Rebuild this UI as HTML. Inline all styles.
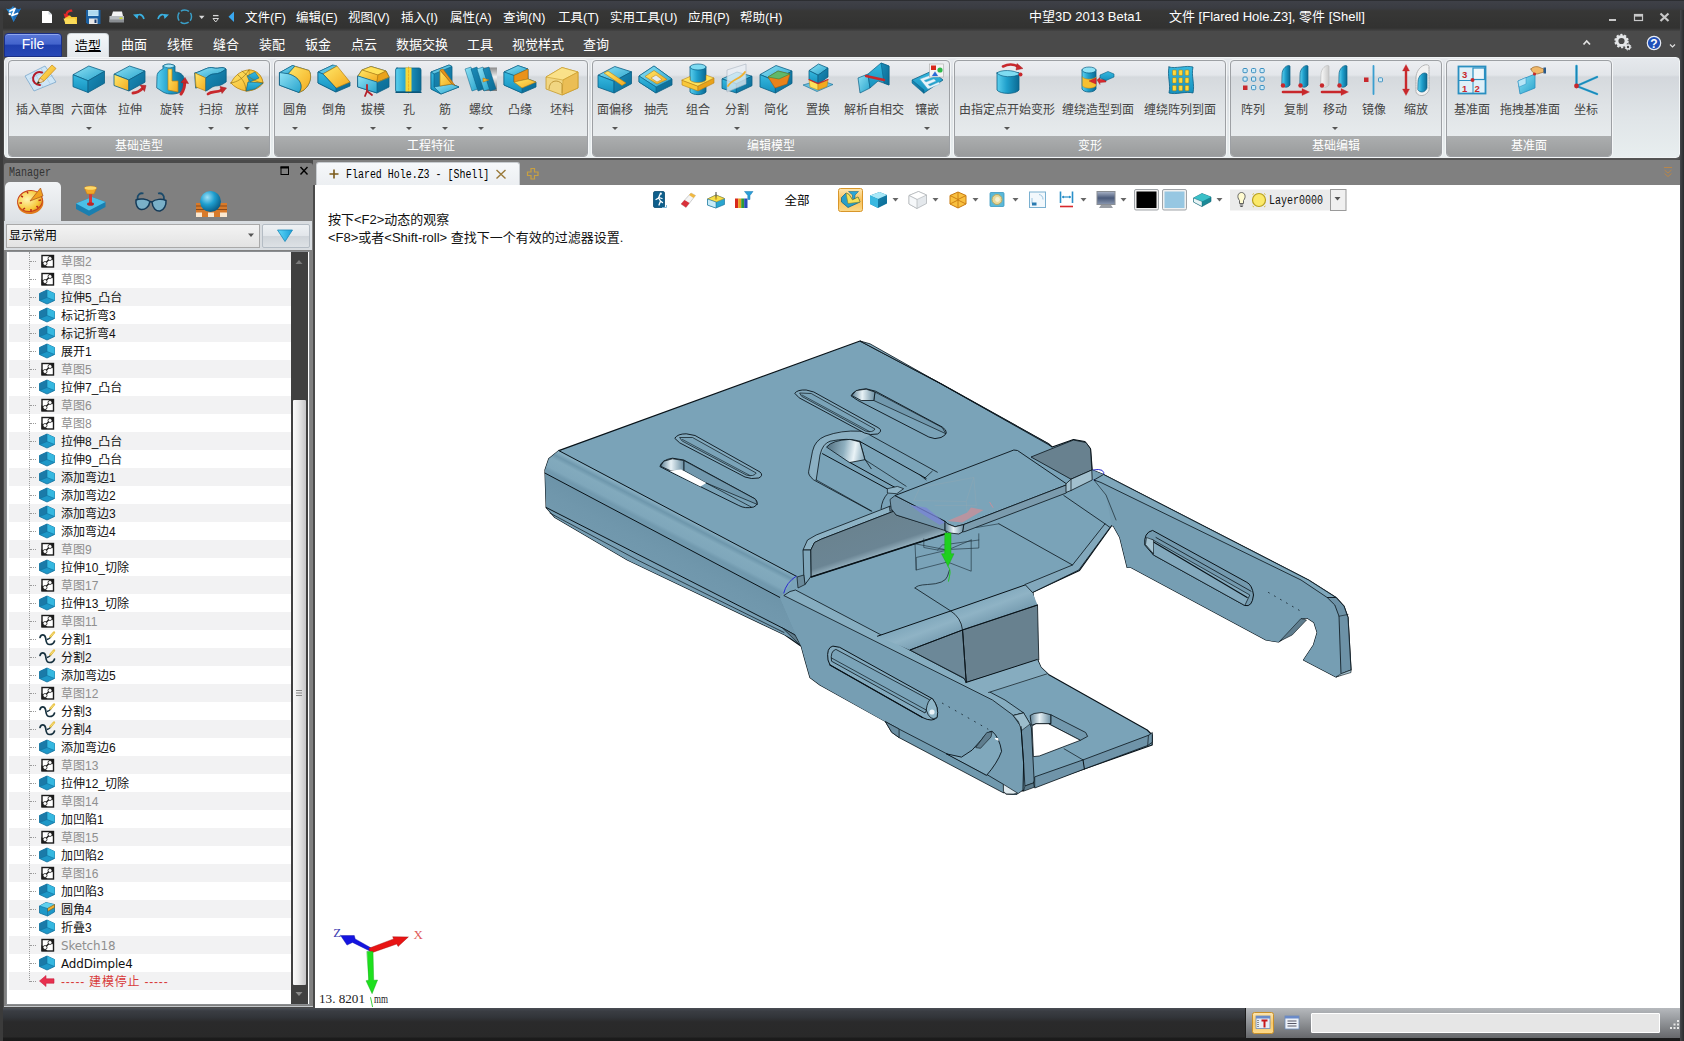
<!DOCTYPE html>
<html lang="zh-CN">
<head>
<meta charset="utf-8">
<title>中望3D 2013 Beta1</title>
<style>
*{box-sizing:border-box;margin:0;padding:0}
html,body{width:1684px;height:1041px;overflow:hidden}
body{position:relative;background:#4a4a4a;font-family:"Liberation Sans","Noto Sans CJK SC",sans-serif;font-size:12px;color:#222}
.abs{position:absolute}
#title{left:0;top:0;width:1684px;height:31px;background:linear-gradient(#232426 0,#3e4047 1.5px,#3a3c42 8px,#373736 11px,#323231 28px,#3e3e3e 30px,#454545 31px)}
#title .t{position:absolute;top:8px;color:#fff;font-size:13px;white-space:nowrap;line-height:17px}
#tabrow{left:0;top:31px;width:1684px;height:27px;background:#4a4a4a}
#lborder{left:0;top:10px;width:3px;height:1031px;background:#3b3b3b}
#rborder{left:1680px;top:10px;width:4px;height:1031px;background:linear-gradient(90deg,#45474b,#2a2a2c)}
.menu{position:absolute;top:10px;color:#fff;font-size:12.5px;white-space:nowrap;line-height:17px}
#file{left:4px;top:33px;width:58px;height:24px;border-radius:4px 4px 0 0;border:1px solid #1a2f86;background:linear-gradient(#5a78d8 0,#4364cc 45%,#1f3fae 52%,#2748b6 100%);color:#fff;font-size:14px;text-align:center;line-height:21px;box-shadow:inset 0 1px 0 #8fa6ee}
.rtab{position:absolute;top:36px;color:#fff;font-size:13px;line-height:17px;white-space:nowrap;transform:translateX(-50%)}
#acttab{left:67px;top:33px;width:42px;height:25px;border-radius:4px 4px 0 0;background:linear-gradient(#f4f7f9,#e3e8ec);border:1px solid #cfd6da;border-bottom:0}
#acttab span{position:absolute;left:0;width:40px;top:3px;text-align:center;color:#000;font-size:13px;line-height:17px;text-decoration:underline}
#ribbon{left:4px;top:56.5px;width:1676px;height:101px;border-radius:4px;background:linear-gradient(#e6e9ed 0,#dde1e5 17px,#d3d7dc 19px,#e0e5e8 60px,#e8eeef 100%);border:1px solid #f2f5f6;box-shadow:0 1.5px 1px #555}
.grp{position:absolute;top:60px;height:97px;border-radius:4px;border:1px solid #9da0a4;background:linear-gradient(#eceef1 0,#e3e6ea 14px,#d5d9dd 16px,#dfe3e6 45px,#e7ebed 76px,#e7ebed 100%);box-shadow:0 0 0 1px #f4f6f7;overflow:hidden}
.grp .gl{position:absolute;left:0;right:0;bottom:0;height:20px;background:linear-gradient(#acaeaf,#999b9c);color:#fff;font-size:12px;line-height:20px;text-align:center}
.rb{position:absolute;top:101.5px;font-size:12px;line-height:17px;color:#444;white-space:nowrap;transform:translateX(-50%)}
.dd{position:absolute;top:127px;width:0;height:0;border:3px solid transparent;border-top:3.5px solid #555;margin-left:-3px}
.ico{position:absolute;overflow:visible}
/* left panel */
#lp{left:4px;top:163px;width:309px;height:843.5px;border-bottom:1.5px solid #c4c8cc;background:#808080;border-radius:3px 3px 0 0}
#lp .hdr{position:absolute;left:4.5px;top:3px;font-family:"Liberation Mono",monospace;font-size:12px;color:#333;line-height:14px;transform:scaleX(.833);transform-origin:0 0}
#ltab{left:4.5px;top:182px;width:56px;height:40px;border-radius:5px 5px 0 0;background:linear-gradient(#f2f4f6,#dde1e5)}
#lstrip{left:4px;top:221px;width:308px;height:29px;background:#d9dde1}
#combo{left:6px;top:224px;width:254px;height:24px;background:linear-gradient(#f3f3f3,#e3e3e3);border:1px solid #a9a9a9;font-size:12px;line-height:23px;padding-left:2px;color:#000}
#fbtn{left:262px;top:224px;width:48px;height:24px;background:linear-gradient(#eef1f4 0,#e2e6ea 48%,#d0d5da 52%,#dde1e5 100%);border:1px solid #b4bcc4;border-radius:2px}
#tree{left:6px;top:251px;width:304px;height:754px;background:#fff;border:1px solid #8a8d90;overflow:hidden}
.tr{position:absolute;left:2px;width:282px;height:18px}
.tr.alt{background:#f2f2f3}
.tl{position:absolute;left:60px;top:1px;font-size:12px;line-height:18px;white-space:nowrap;color:#111}
.tl.g{color:#8f8f8f}
.tl.r{color:#d83a3a}
#vline{left:29px;top:252px;width:0;height:730px;border-left:1px dotted #9a9a9a}
#sb{left:291px;top:252px;width:17px;height:752px;background:#404040}
#sbthumb{left:293px;top:400px;width:13px;height:585px;border-radius:1px;background:linear-gradient(90deg,#fafafa 0,#ececec 40%,#c4c4c6 100%)}
/* doc area */
#dochdr{left:313px;top:160px;width:1367px;height:25px;background:#808080}
#doctab{left:316px;top:162px;width:204px;height:23px;background:linear-gradient(#f6f8fa,#eceff2);border-radius:3px 3px 0 0;border:1px solid #c8ccd0;border-bottom:0}
#doctab .tx{position:absolute;left:28.5px;top:4.5px;font-family:"Liberation Mono",monospace;font-size:12px;color:#000;white-space:nowrap;line-height:14px;transform:scaleX(.829);transform-origin:0 0}
#view{left:314.5px;top:185px;width:1365px;height:823px;background:#fff}
.msg{position:absolute;left:328px;font-size:13px;line-height:16px;color:#111;white-space:nowrap}
/* status */
#status{left:0;top:1008px;width:1684px;height:33px;background:linear-gradient(#4a4e55 0,#3a3d43 3px,#32353a 9px,#2a2a2b 14px,#292929 29px,#1c1c1c 30px,#1a1a1a 100%)}
#sright{left:1245px;top:1008px;width:435px;height:30px;background:linear-gradient(#b6b9bd 0,#9a9da1 35%,#66686b 100%);border-left:1px solid #1c1c1c}
#sinput{left:1311px;top:1013px;width:349px;height:20px;background:#e6e6e6;border:1px solid #fff;border-radius:1px}
.tl.en{font-family:"DejaVu Sans",sans-serif;font-size:11.9px;letter-spacing:-.1px}
.tl.r{letter-spacing:.8px}
.hc{position:absolute;left:21px;top:9px;width:6px;border-top:1px dotted #9a9a9a}
</style>
</head>
<body>

<div class="abs" id="title">
<span class="menu" style="left:245px">文件(F)</span>
<span class="menu" style="left:296px">编辑(E)</span>
<span class="menu" style="left:348px">视图(V)</span>
<span class="menu" style="left:401px">插入(I)</span>
<span class="menu" style="left:450px">属性(A)</span>
<span class="menu" style="left:503px">查询(N)</span>
<span class="menu" style="left:558px">工具(T)</span>
<span class="menu" style="left:610px">实用工具(U)</span>
<span class="menu" style="left:688px">应用(P)</span>
<span class="menu" style="left:740px">帮助(H)</span>
<span class="t" style="left:1029px">中望3D 2013 Beta1</span>
<span class="t" style="left:1169px">文件 [Flared Hole.Z3], 零件 [Shell]</span>
</div>
<div class="abs" id="tabrow"></div>
<div class="abs" id="file">File</div>
<div class="abs" id="acttab"><span>造型</span></div>
<span class="rtab" style="left:134px">曲面</span>
<span class="rtab" style="left:180px">线框</span>
<span class="rtab" style="left:226px">缝合</span>
<span class="rtab" style="left:272px">装配</span>
<span class="rtab" style="left:318px">钣金</span>
<span class="rtab" style="left:364px">点云</span>
<span class="rtab" style="left:422px">数据交换</span>
<span class="rtab" style="left:480px">工具</span>
<span class="rtab" style="left:538px">视觉样式</span>
<span class="rtab" style="left:596px">查询</span>
<div class="abs" id="ribbon"></div>
<div class="grp" style="left:8px;width:262px"><div class="gl">基础造型</div></div>
<div class="grp" style="left:274px;width:314px"><div class="gl">工程特征</div></div>
<div class="grp" style="left:592px;width:358px"><div class="gl">编辑模型</div></div>
<div class="grp" style="left:954px;width:272px"><div class="gl">变形</div></div>
<div class="grp" style="left:1230px;width:212px"><div class="gl">基础编辑</div></div>
<div class="grp" style="left:1446px;width:166px"><div class="gl">基准面</div></div>
<span class="rb" style="left:40px">插入草图</span>
<span class="rb" style="left:89px">六面体</span>
<i class="dd" style="left:89px"></i>
<span class="rb" style="left:130px">拉伸</span>
<span class="rb" style="left:172px">旋转</span>
<span class="rb" style="left:211px">扫掠</span>
<i class="dd" style="left:211px"></i>
<span class="rb" style="left:247px">放样</span>
<i class="dd" style="left:247px"></i>
<span class="rb" style="left:295px">圆角</span>
<i class="dd" style="left:295px"></i>
<span class="rb" style="left:334px">倒角</span>
<span class="rb" style="left:373px">拔模</span>
<i class="dd" style="left:373px"></i>
<span class="rb" style="left:409px">孔</span>
<i class="dd" style="left:409px"></i>
<span class="rb" style="left:445px">筋</span>
<i class="dd" style="left:445px"></i>
<span class="rb" style="left:481px">螺纹</span>
<i class="dd" style="left:481px"></i>
<span class="rb" style="left:520px">凸缘</span>
<span class="rb" style="left:562px">坯料</span>
<span class="rb" style="left:615px">面偏移</span>
<i class="dd" style="left:615px"></i>
<span class="rb" style="left:656px">抽壳</span>
<span class="rb" style="left:698px">组合</span>
<span class="rb" style="left:737px">分割</span>
<i class="dd" style="left:737px"></i>
<span class="rb" style="left:776px">简化</span>
<span class="rb" style="left:818px">置换</span>
<span class="rb" style="left:874px">解析自相交</span>
<span class="rb" style="left:927px">镶嵌</span>
<i class="dd" style="left:927px"></i>
<span class="rb" style="left:1007px">由指定点开始变形</span>
<i class="dd" style="left:1007px"></i>
<span class="rb" style="left:1098px">缠绕造型到面</span>
<span class="rb" style="left:1180px">缠绕阵列到面</span>
<span class="rb" style="left:1253px">阵列</span>
<span class="rb" style="left:1296px">复制</span>
<span class="rb" style="left:1335px">移动</span>
<i class="dd" style="left:1335px"></i>
<span class="rb" style="left:1374px">镜像</span>
<span class="rb" style="left:1416px">缩放</span>
<span class="rb" style="left:1472px">基准面</span>
<span class="rb" style="left:1530px">拖拽基准面</span>
<span class="rb" style="left:1586px">坐标</span>
<svg width="0" height="0" style="position:absolute">
<defs>
<g id="i-c"><path d="M1.500 5.500 L9 2 L16.500 5.500 L16.500 12.500 L9 16 L1.500 12.500 Z" fill="#1e98c8" stroke="#0f6f9c" stroke-width=".8" stroke-linejoin="round"/><path d="M1.500 5.500 L9 2 L9 9.500 L1.500 12.500 Z" fill="#1a7aa8"/><path d="M9 2 L16.500 5.500 L16.500 12.500 L9 9.500 Z" fill="#36b8e0"/><path d="M9 2 L9 9.500 L1.500 12.500 M9 9.500 L16.500 12.500" fill="none" stroke="#0f6f9c" stroke-width=".6"/></g>
<g id="i-s"><rect x="4" y="3.500" width="11.500" height="11.500" fill="#fff" stroke="#1a1a1a" stroke-width="1.400"/><path d="M3.500 9 L3.500 15 L9.500 15 Z" fill="#1a1a1a"/><path d="M9.500 3 L15.500 3 L15.500 9 Z" fill="#1a1a1a"/><path d="M6.500 12 L12.500 6" stroke="#1a1a1a" stroke-width="1.400"/><circle cx="7" cy="11.500" r="2" fill="#fff" stroke="#1a1a1a" stroke-width=".8"/><circle cx="12" cy="6.500" r="2" fill="#fff" stroke="#1a1a1a" stroke-width=".8"/></g>
<g id="i-p"><path d="M2 7.500 C3 4,6.500 4,7.500 7.500 C8.500 11,7.500 14.500,11.500 14.500 C14 14.500,16 13,16.500 11" fill="none" stroke="#16303e" stroke-width="1.700" stroke-linecap="round"/><path d="M9 9.500 C11 9,13 7,14 5" fill="none" stroke="#16303e" stroke-width="1.300"/><path d="M12.500 6.500 L16 2.500" stroke="#e8c040" stroke-width="2.400" stroke-linecap="round"/><path d="M13 6 L15.500 3" stroke="#f8e48a" stroke-width=".9" stroke-linecap="round"/></g>
<g id="i-f"><path d="M1.500 6 L8 2.500 L16.500 4.500 L16.500 12 L9.500 16 L1.500 13 Z" fill="#1e98c8" stroke="#0f6f9c" stroke-width=".8" stroke-linejoin="round"/><path d="M1.500 6 L8 2.500 L16.500 4.500 L9.500 8.500 Z" fill="#5fd0ee"/><path d="M9.500 8.500 L16.500 4.500 L16.500 7.500 L9.500 11.500 Z" fill="#f0b030" stroke="#8a5a10" stroke-width=".6"/><path d="M1.500 6 L9.500 8.500 L9.500 16" fill="none" stroke="#0f6f9c" stroke-width=".6"/></g>
<g id="i-a"><path d="M1.500 9 L8 3.500 L8 6.800 L16 6.800 L16 11.200 L8 11.200 L8 14.500 Z" fill="#e8304e" stroke="#c82040" stroke-width=".6"/></g>
</defs></svg>

<svg class="abs" style="left:0;top:0" width="1684" height="160" viewBox="0 0 1684 160">
<defs>
<linearGradient id="gT" x1="0" y1="0" x2="1" y2="1"><stop offset="0" stop-color="#8fe2f5"/><stop offset="1" stop-color="#27a3cc"/></linearGradient>
<linearGradient id="gF" x1="0" y1="0" x2="0" y2="1"><stop offset="0" stop-color="#36b9e0"/><stop offset="1" stop-color="#1590bd"/></linearGradient>
<linearGradient id="gS" x1="0" y1="0" x2="1" y2="1"><stop offset="0" stop-color="#1b8dba"/><stop offset="1" stop-color="#0b6a93"/></linearGradient>
<linearGradient id="gY" x1="0" y1="0" x2="1" y2="1"><stop offset="0" stop-color="#ffe96a"/><stop offset="1" stop-color="#f3a91e"/></linearGradient>
<linearGradient id="gCy" x1="0" y1="0" x2="1" y2="0"><stop offset="0" stop-color="#5cd0ee"/><stop offset=".45" stop-color="#1f9fcb"/><stop offset="1" stop-color="#0b6a93"/></linearGradient>
<linearGradient id="gW" x1="0" y1="0" x2="1" y2="0"><stop offset="0" stop-color="#fafafa"/><stop offset="1" stop-color="#c9c9c9"/></linearGradient>
<linearGradient id="gM" x1="0" y1="0" x2="0" y2="1"><stop offset="0" stop-color="#8a8a8a"/><stop offset=".4" stop-color="#f2f2f2"/><stop offset="1" stop-color="#7a7a7a"/></linearGradient>
</defs>
<polygon points="25.0,76.0 45.0,66.0 56.0,82.0 34.0,91.0" fill="#cfe6f6" stroke="#7aa7cc" stroke-width="0.8" stroke-linejoin="round" />
<path d="M30 78.500 L50 69.500 M33 84 L53 75.500 M34 72 L43 87 M41 68.500 L50 83.500" fill="none" stroke="#9fc4e2" stroke-width="0.6" stroke-linejoin="round" stroke-linecap="round" />
<path d="M42 72.500 A6.500 6.500 0 1 0 40 85" fill="none" stroke="#b31a2a" stroke-width="2" stroke-linejoin="round" stroke-linecap="round" />
<polygon points="37.0,84.0 40.0,78.0 52.0,65.0 56.0,68.5 44.0,81.0" fill="url(#gY)" stroke="#c98a12" stroke-width="0.7" stroke-linejoin="round" />
<polygon points="37.0,84.0 40.0,78.0 44.0,81.0" fill="#f5d6a8" stroke="#a9753a" stroke-width="0.5" stroke-linejoin="round" />
<polygon points="37.0,84.0 38.2,81.5 39.8,82.7" fill="#222" stroke="#222" stroke-width="0.3" stroke-linejoin="round" />
<polygon points="73.0,74.7 88.8,66.0 104.5,71.3 88.1,80.8" fill="url(#gT)" stroke="#0b5f85" stroke-width="0.8" stroke-linejoin="round" />
<polygon points="73.0,74.7 88.1,80.8 88.1,92.5 73.0,86.7" fill="url(#gF)" stroke="#0b5f85" stroke-width="0.8" stroke-linejoin="round" />
<polygon points="88.1,80.8 104.5,71.3 104.5,83.2 88.1,92.5" fill="url(#gS)" stroke="#0b5f85" stroke-width="0.8" stroke-linejoin="round" />
<polygon points="114.0,74.2 129.5,66.0 145.0,71.0 128.9,80.0" fill="url(#gT)" stroke="#0b5f85" stroke-width="0.8" stroke-linejoin="round" />
<polygon points="114.0,74.2 128.9,80.0 128.9,91.0 114.0,85.5" fill="url(#gY)" stroke="#0b5f85" stroke-width="0.8" stroke-linejoin="round" />
<polygon points="128.9,80.0 145.0,71.0 145.0,82.2 128.9,91.0" fill="url(#gS)" stroke="#0b5f85" stroke-width="0.8" stroke-linejoin="round" />
<path d="M133 93 C137 93,140 91,143 88" fill="none" stroke="#c8282c" stroke-width="3" stroke-linejoin="round" stroke-linecap="round" />
<polygon points="140.0,85.0 146.0,85.5 144.5,91.5" fill="#c8282c" stroke="#a01c20" stroke-width="0.5" stroke-linejoin="round" />
<path d="M157 76 C157 71,163 69,163 69 L163 66 C165 63.500,172 63.500,175 66 L175 72 C180 72,184 75,184 79 L184 90 C178 95,168 95,163 92 L157 88 Z" fill="url(#gCy)" stroke="#0b5f85" stroke-width="0.8" stroke-linejoin="round" stroke-linecap="round" />
<path d="M163 66 C166 68.500,172 68.500,175 66 C172 63.500,165 63.500,163 66 Z" fill="#a8e8f8" stroke="#0b5f85" stroke-width="0.6" stroke-linejoin="round" stroke-linecap="round" />
<polygon points="168.0,69.0 172.0,69.0 172.0,81.0 178.0,81.0 178.0,92.0 168.0,90.0" fill="url(#gY)" stroke="#b98214" stroke-width="0.7" stroke-linejoin="round" />
<path d="M181 94 C184 90,185 86,184.500 82" fill="none" stroke="#c8282c" stroke-width="3" stroke-linejoin="round" stroke-linecap="round" />
<polygon points="181.0,82.5 185.0,77.5 188.5,83.5" fill="#c8282c" stroke="#a01c20" stroke-width="0.5" stroke-linejoin="round" />
<path d="M195 73 C203 71,208 66,214 68 C219 69,222 66,226 69 L226 82 C222 80,219 83,214 82 C209 81,204 86,196 88 Z" fill="url(#gS)" stroke="#0b5f85" stroke-width="0.8" stroke-linejoin="round" stroke-linecap="round" />
<path d="M195 73 C203 71,208 66,214 68 C219 69,222 66,226 69 C222 72,219 74,214 74 C209 74,207 78,206 78 Z" fill="url(#gT)" stroke="#0b5f85" stroke-width="0.7" stroke-linejoin="round" stroke-linecap="round" />
<polygon points="195.0,73.0 206.0,78.0 206.0,91.0 196.0,87.0" fill="url(#gY)" stroke="#b98214" stroke-width="0.7" stroke-linejoin="round" />
<path d="M206 78 C209 76,211 74,214 74 C219 74,222 72,226 69 L226 82 C222 85,219 86,215 86 C211 87,209 90,206 91 Z" fill="url(#gS)" stroke="#0b5f85" stroke-width="0.7" stroke-linejoin="round" stroke-linecap="round" />
<path d="M208 94 C212 91,216 93,222 90" fill="none" stroke="#c8282c" stroke-width="2.8" stroke-linejoin="round" stroke-linecap="round" />
<polygon points="220.0,86.5 226.5,88.0 222.0,93.5" fill="#c8282c" stroke="#a01c20" stroke-width="0.5" stroke-linejoin="round" />
<path d="M231 83 C235 74,243 70,249 70 C256 70,262 75,263 83 C260 88,252 91,246 91 C240 90,234 87,231 83 Z" fill="url(#gY)" stroke="#b98214" stroke-width="0.8" stroke-linejoin="round" stroke-linecap="round" />
<path d="M249 70 C256 70,262 75,263 83 C260 88,252 91,246 91 C248 85,250 78,249 70 Z" fill="#f7c83a" stroke="#b98214" stroke-width="0.6" stroke-linejoin="round" stroke-linecap="round" />
<polygon points="246.0,91.0 248.0,82.0 263.0,83.0 255.0,89.0" fill="url(#gF)" stroke="#0b5f85" stroke-width="0.6" stroke-linejoin="round" />
<polygon points="247.0,76.0 255.0,72.0 259.0,78.0 250.0,82.0" fill="url(#gF)" stroke="#0b5f85" stroke-width="0.5" stroke-linejoin="round" />
<path d="M238 75 C243 79,246 85,246 91 M242 71 C248 76,254 82,263 83 M231 83 C237 82,243 79,249 70" fill="none" stroke="#8a6a10" stroke-width="0.6" stroke-linejoin="round" stroke-linecap="round" />
<path d="M279.800 72.600 L292.500 65.500 L309 70.500 C312 75,311 84,304 90 L299 92.500 L279.800 85.300 Z" fill="url(#gS)" stroke="#0b5f85" stroke-width="0.8" stroke-linejoin="round" stroke-linecap="round" />
<path d="M288 73.700 L294.700 66.300 L309 70.500 C312 75,311 84,304 90 L299 92.500 C304 86,300 77,288 73.700 Z" fill="url(#gY)" stroke="#b98214" stroke-width="0.7" stroke-linejoin="round" stroke-linecap="round" />
<path d="M279.800 72.600 L292.500 65.500 L294.700 66.300 L288 73.700 Z" fill="url(#gT)" stroke="#0b5f85" stroke-width="0.6" stroke-linejoin="round" stroke-linecap="round" />
<path d="M279.800 72.600 L288 73.700 C300 77,304 86,299 92.500 L279.800 85.300 Z" fill="url(#gT)" stroke="#0b5f85" stroke-width="0.7" stroke-linejoin="round" stroke-linecap="round" />
<polygon points="318.0,72.0 333.0,65.0 350.0,82.0 350.0,86.0 336.0,92.0 318.0,83.0" fill="url(#gS)" stroke="#0b5f85" stroke-width="0.8" stroke-linejoin="round" />
<polygon points="318.0,72.0 333.0,65.0 337.0,66.0 323.0,74.0" fill="url(#gT)" stroke="#0b5f85" stroke-width="0.6" stroke-linejoin="round" />
<polygon points="323.0,74.0 337.0,66.0 350.0,82.0 336.0,88.0" fill="url(#gY)" stroke="#b98214" stroke-width="0.7" stroke-linejoin="round" />
<polygon points="318.0,72.0 323.0,74.0 336.0,88.0 336.0,92.0 318.0,83.0" fill="url(#gF)" stroke="#0b5f85" stroke-width="0.7" stroke-linejoin="round" />
<path d="M358 76 L362 70 L371 66.500 L386 71 L389 77 L389 87 L377 93 L358 87 Z" fill="url(#gS)" stroke="#0b5f85" stroke-width="0.8" stroke-linejoin="round" stroke-linecap="round" />
<path d="M362 70 L371 66.500 L386 71 L378 75 Z" fill="#ffe25a" stroke="#b98214" stroke-width="0.7" stroke-linejoin="round" stroke-linecap="round" />
<path d="M358 76 L362 70 L378 75 L377 82 Z" fill="url(#gY)" stroke="#b98214" stroke-width="0.7" stroke-linejoin="round" stroke-linecap="round" />
<path d="M377 82 L378 75 L386 71 L389 77 Z" fill="#e9a21a" stroke="#b98214" stroke-width="0.7" stroke-linejoin="round" stroke-linecap="round" />
<path d="M358 76 L377 82 L377 93 L358 87 Z" fill="url(#gT)" stroke="#0b5f85" stroke-width="0.7" stroke-linejoin="round" stroke-linecap="round" />
<path d="M365 96 L367 91 L367 85 M367 91 L372 95" fill="none" stroke="#b3202a" stroke-width="1.8" stroke-linejoin="round" stroke-linecap="round" />
<path d="M397 68 L419 68 Q421 68 421 70 L421 90 Q421 92 419 92 L397 92 Q395.600 92 395.600 90 L395.600 70 Q395.600 68 397 68 Z" fill="url(#gCy)" stroke="#0b5f85" stroke-width="0.8" stroke-linejoin="round" stroke-linecap="round" />
<rect x="405.500" y="67.500" width="6" height="25" fill="#f4d83a"/>
<path d="M408.500 67 L408.500 93" fill="none" stroke="#e8a81e" stroke-width="0.8" stroke-linejoin="round" stroke-linecap="round" stroke-dasharray="2 1.500"/>
<path d="M396 92.300 L421 92.300" fill="none" stroke="#0a5578" stroke-width="1.4" stroke-linejoin="round" stroke-linecap="round" />
<polygon points="431.0,72.0 449.0,65.0 452.0,66.5 452.0,84.0 459.0,87.0 441.0,94.0 431.0,89.0" fill="url(#gS)" stroke="#0b5f85" stroke-width="0.8" stroke-linejoin="round" />
<polygon points="431.0,72.0 449.0,65.0 452.0,66.5 434.0,74.0" fill="url(#gT)" stroke="#0b5f85" stroke-width="0.6" stroke-linejoin="round" />
<polygon points="431.0,72.0 434.0,74.0 434.0,87.0 441.0,90.5 441.0,94.0 431.0,89.0" fill="url(#gF)" stroke="#0b5f85" stroke-width="0.6" stroke-linejoin="round" />
<polygon points="434.0,87.0 452.0,84.0 459.0,87.0 441.0,94.0" fill="url(#gT)" stroke="#0b5f85" stroke-width="0.6" stroke-linejoin="round" />
<polygon points="440.0,70.0 440.0,86.0 452.0,84.0" fill="url(#gY)" stroke="#b98214" stroke-width="0.7" stroke-linejoin="round" />
<polygon points="440.0,70.0 443.0,69.0 455.0,85.5 452.0,84.0" fill="#e9921a" stroke="#a86a10" stroke-width="0.6" stroke-linejoin="round" />
<rect x="483" y="67.500" width="14" height="23.500" fill="url(#gM)"/>
<polygon points="465.0,69.0 471.0,67.0 478.0,89.0 472.0,91.0" fill="url(#gT)" stroke="#0b5f85" stroke-width="0.5" stroke-linejoin="round" />
<polygon points="471.0,69.0 477.0,67.0 484.0,89.0 478.0,91.0" fill="url(#gS)" stroke="#0b5f85" stroke-width="0.5" stroke-linejoin="round" />
<polygon points="477.0,69.0 483.0,67.0 490.0,89.0 484.0,91.0" fill="url(#gT)" stroke="#0b5f85" stroke-width="0.5" stroke-linejoin="round" />
<polygon points="483.0,69.0 489.0,67.0 496.0,89.0 490.0,91.0" fill="url(#gS)" stroke="#0b5f85" stroke-width="0.5" stroke-linejoin="round" />
<polygon points="483.0,78.0 489.0,80.0 483.0,82.0" fill="#f3b52a" stroke="#a86a10" stroke-width="0.5" stroke-linejoin="round" />
<polygon points="504.0,72.0 518.0,65.6 528.0,69.0 528.0,79.0 536.0,82.0 536.0,87.0 522.0,93.0 504.0,85.0" fill="url(#gS)" stroke="#0b5f85" stroke-width="0.8" stroke-linejoin="round" />
<polygon points="504.0,72.0 518.0,65.6 528.0,69.0 514.0,75.5" fill="url(#gT)" stroke="#0b5f85" stroke-width="0.6" stroke-linejoin="round" />
<polygon points="504.0,72.0 514.0,75.5 514.0,82.0 522.0,85.5 522.0,93.0 504.0,85.0" fill="url(#gF)" stroke="#0b5f85" stroke-width="0.6" stroke-linejoin="round" />
<polygon points="514.0,75.5 528.0,69.0 528.0,79.0 514.0,82.0" fill="#e9921a" stroke="#a86a10" stroke-width="0.6" stroke-linejoin="round" />
<polygon points="514.0,82.0 528.0,79.0 536.0,82.0 522.0,88.0" fill="url(#gY)" stroke="#b98214" stroke-width="0.6" stroke-linejoin="round" />
<polygon points="546.0,77.0 562.0,67.5 578.0,72.0 578.0,88.0 562.0,95.0 546.0,89.0" fill="#f7d56a" stroke="#c79a2a" stroke-width="0.8" stroke-linejoin="round" fill-opacity=".8"/>
<polygon points="546.0,77.0 562.0,67.5 578.0,72.0 563.0,80.0" fill="#fbe28a" stroke="#c79a2a" stroke-width="0.6" stroke-linejoin="round" fill-opacity=".9"/>
<polygon points="563.0,80.0 578.0,72.0 578.0,88.0 562.0,95.0" fill="#eab84a" stroke="#c79a2a" stroke-width="0.6" stroke-linejoin="round" fill-opacity=".8"/>
<path d="M549 89 C549 80,558 79,562 84 L562 93" fill="none" stroke="#b58a2a" stroke-width="0.8" stroke-linejoin="round" stroke-linecap="round" />
<polygon points="598.0,75.2 614.8,66.5 631.5,71.8 614.1,81.3" fill="url(#gT)" stroke="#0b5f85" stroke-width="0.8" stroke-linejoin="round" />
<polygon points="598.0,75.2 614.1,81.3 614.1,93.0 598.0,87.2" fill="url(#gF)" stroke="#0b5f85" stroke-width="0.8" stroke-linejoin="round" />
<polygon points="614.1,81.3 631.5,71.8 631.5,83.7 614.1,93.0" fill="url(#gS)" stroke="#0b5f85" stroke-width="0.8" stroke-linejoin="round" />
<polygon points="604.0,73.0 608.0,71.0 626.0,83.0 622.0,85.5" fill="url(#gY)" stroke="#b98214" stroke-width="0.6" stroke-linejoin="round" />
<polygon points="639.0,76.0 654.0,66.0 672.0,79.0 672.0,85.0 656.0,93.0 639.0,82.0" fill="url(#gS)" stroke="#0b5f85" stroke-width="0.8" stroke-linejoin="round" />
<polygon points="639.0,76.0 654.0,66.0 672.0,79.0 656.0,87.0" fill="url(#gT)" stroke="#0b5f85" stroke-width="0.6" stroke-linejoin="round" />
<polygon points="645.0,76.5 654.0,70.5 667.0,79.5 657.0,84.0" fill="url(#gY)" stroke="#b98214" stroke-width="0.6" stroke-linejoin="round" />
<polygon points="651.0,78.0 656.0,75.0 662.0,79.5 657.0,82.0" fill="#e6ebef" stroke="#b98214" stroke-width="0.5" stroke-linejoin="round" />
<polygon points="639.0,76.0 656.0,87.0 656.0,93.0 639.0,82.0" fill="url(#gF)" stroke="#0b5f85" stroke-width="0.6" stroke-linejoin="round" />
<path d="M690 67 L690 92 C693 95.500,703 95.500,706 92 L706 67 Z" fill="url(#gCy)" stroke="#0b5f85" stroke-width="0.8" stroke-linejoin="round" stroke-linecap="round" />
<ellipse cx="698" cy="67" rx="8" ry="3" fill="#7fdcf2" stroke="#0b5f85" stroke-width=".7"/>
<polygon points="682.0,80.0 698.0,86.0 698.0,91.0 682.0,85.0" fill="#f8c83a" stroke="#b98214" stroke-width="0.6" stroke-linejoin="round" />
<polygon points="698.0,86.0 714.0,78.0 714.0,83.0 698.0,91.0" fill="#e9a21a" stroke="#b98214" stroke-width="0.6" stroke-linejoin="round" />
<path d="M682 80 L690 76.500 L690 80 C693 83.500,703 83.500,706 80 L706 75 L714 78 L698 86 Z" fill="#ffe25a" stroke="#b98214" stroke-width="0.6" stroke-linejoin="round" stroke-linecap="round" />
<polygon points="722.0,78.9 737.0,72.0 752.0,76.2 736.4,83.8" fill="url(#gT)" stroke="#0b5f85" stroke-width="0.8" stroke-linejoin="round" />
<polygon points="722.0,78.9 736.4,83.8 736.4,93.0 722.0,88.4" fill="url(#gF)" stroke="#0b5f85" stroke-width="0.8" stroke-linejoin="round" />
<polygon points="736.4,83.8 752.0,76.2 752.0,85.7 736.4,93.0" fill="url(#gS)" stroke="#0b5f85" stroke-width="0.8" stroke-linejoin="round" />
<polygon points="727.0,70.0 746.0,64.0 746.0,84.0 727.0,92.0" fill="#e8eef4" stroke="#aab4c0" stroke-width="0.6" stroke-linejoin="round" fill-opacity=".75"/>
<path d="M728 86 C733 78,740 80,745 72" fill="none" stroke="#f0b030" stroke-width="1.8" stroke-linejoin="round" stroke-linecap="round" />
<polygon points="760.0,74.6 776.0,65.5 792.0,71.0 775.4,80.9" fill="url(#gT)" stroke="#0b5f85" stroke-width="0.8" stroke-linejoin="round" />
<polygon points="760.0,74.6 775.4,80.9 775.4,93.0 760.0,87.0" fill="url(#gF)" stroke="#0b5f85" stroke-width="0.8" stroke-linejoin="round" />
<polygon points="775.4,80.9 792.0,71.0 792.0,83.4 775.4,93.0" fill="url(#gS)" stroke="#0b5f85" stroke-width="0.8" stroke-linejoin="round" />
<polygon points="768.0,77.0 778.0,71.0 790.0,74.0 787.0,84.0 775.0,88.0" fill="#e9821a" stroke="#a85a10" stroke-width="0.6" stroke-linejoin="round" />
<polygon points="768.0,77.0 778.0,71.0 790.0,74.0 779.0,79.0" fill="#5fb86a" stroke="#2a7a3a" stroke-width="0.5" stroke-linejoin="round" />
<polygon points="803.0,85.0 820.0,80.0 833.0,84.5 817.0,91.5" fill="#4fb8dc" stroke="#0b6a93" stroke-width="0.6" stroke-linejoin="round" fill-opacity=".8"/>
<polygon points="809.0,70.6 818.5,64.0 828.0,68.0 818.1,75.2" fill="url(#gT)" stroke="#0b5f85" stroke-width="0.8" stroke-linejoin="round" />
<polygon points="809.0,70.6 818.1,75.2 818.1,84.0 809.0,79.6" fill="url(#gF)" stroke="#0b5f85" stroke-width="0.8" stroke-linejoin="round" />
<polygon points="818.1,75.2 828.0,68.0 828.0,77.0 818.1,84.0" fill="url(#gS)" stroke="#0b5f85" stroke-width="0.8" stroke-linejoin="round" />
<polygon points="809.0,80.0 818.0,84.0 818.0,90.0 810.0,87.0" fill="#ffe25a" stroke="#b98214" stroke-width="0.5" stroke-linejoin="round" />
<polygon points="818.0,84.0 828.0,80.0 827.0,86.5 818.0,90.0" fill="#f3a91e" stroke="#b98214" stroke-width="0.5" stroke-linejoin="round" />
<path d="M809 79.500 L818 83.500 L828 79.500" fill="none" stroke="#c8282c" stroke-width="1.2" stroke-linejoin="round" stroke-linecap="round" />
<polygon points="858.0,78.0 868.0,74.0 870.0,88.0 860.0,93.0" fill="url(#gT)" stroke="#0b5f85" stroke-width="0.7" stroke-linejoin="round" />
<polygon points="868.0,74.0 881.0,63.0 889.0,66.0 889.0,85.0 878.0,81.0 870.0,88.0" fill="url(#gF)" stroke="#0b5f85" stroke-width="0.7" stroke-linejoin="round" />
<polygon points="881.0,63.0 889.0,66.0 889.0,85.0 884.0,83.0" fill="url(#gS)" stroke="#0b5f85" stroke-width="0.6" stroke-linejoin="round" />
<path d="M866 76 L884 80" fill="none" stroke="#c8282c" stroke-width="2.4" stroke-linejoin="round" stroke-linecap="round" />
<polygon points="912.0,80.0 932.0,71.0 943.0,80.0 924.0,93.0" fill="url(#gF)" stroke="#0b5f85" stroke-width="0.8" stroke-linejoin="round" />
<polygon points="912.0,80.0 924.0,90.0 924.0,93.5 912.0,83.0" fill="url(#gS)" stroke="#0b5f85" stroke-width="0.5" stroke-linejoin="round" />
<path d="M920 79 L931 75 L933 77 L924 80.500 L926 82 L934 79 L936 81 L928 84.500 L930 86 L939 82 L940 84 L928 89 Z" fill="#e8f4fa" stroke="#7ab8d4" stroke-width="0.4" stroke-linejoin="round" stroke-linecap="round" />
<rect x="929.500" y="64" width="14" height="13" fill="#f4f4f4" stroke="#aaa" stroke-width=".6"/>
<rect x="931" y="65.500" width="5" height="4.500" fill="#d8281c"/><circle cx="940" cy="70" r="2.600" fill="#2eb84a"/>
<polygon points="932.0,76.0 935.0,71.5 938.0,76.0" fill="#2a6ad8" stroke="#2a6ad8" stroke-width="0.2" stroke-linejoin="round" />
<path d="M997 73 L997 90 C1000 94.500,1016 94.500,1019 90 L1019 73 Z" fill="url(#gCy)" stroke="#0b5f85" stroke-width="0.8" stroke-linejoin="round" stroke-linecap="round" />
<path d="M997 73 C1000 69.500,1014 69.500,1020 74 C1014 78,1000 77.500,997 73 Z" fill="#7fdcf2" stroke="#0b5f85" stroke-width="0.7" stroke-linejoin="round" stroke-linecap="round" />
<circle cx="1020.500" cy="74.500" r="2" fill="#c8282c"/>
<path d="M1003 66.500 C1008 64,1014 64,1019 67" fill="none" stroke="#c8282c" stroke-width="2.6" stroke-linejoin="round" stroke-linecap="round" />
<polygon points="1017.0,63.5 1023.0,68.5 1016.0,70.0" fill="#c8282c" stroke="#a01c20" stroke-width="0.4" stroke-linejoin="round" />
<path d="M1082 70 L1082 89 C1084 93,1094 93,1096 89 L1096 70 Z" fill="url(#gCy)" stroke="#0b5f85" stroke-width="0.8" stroke-linejoin="round" stroke-linecap="round" />
<ellipse cx="1089" cy="70" rx="7" ry="3" fill="#8fe2f5" stroke="#0b5f85" stroke-width=".7"/>
<path d="M1082.500 77 C1085 80,1093 80,1096 77 L1096 86 C1093 89,1085 89,1082.500 86 Z" fill="#f8c030" stroke="#b98214" stroke-width="0.5" stroke-linejoin="round" stroke-linecap="round" />
<polygon points="1097.0,80.0 1100.0,77.5 1100.0,79.5 1106.0,79.0 1106.0,82.0 1100.0,82.5 1100.0,84.5" fill="#d8282c" stroke="#a01c20" stroke-width="0.4" stroke-linejoin="round" />
<polygon points="1089.0,81.0 1096.0,78.0 1096.0,84.0" fill="#d8282c" stroke="#a01c20" stroke-width="0.4" stroke-linejoin="round" />
<polygon points="1100.0,75.0 1108.0,71.5 1114.0,74.0 1114.0,77.0 1106.0,80.5 1100.0,78.0" fill="url(#gF)" stroke="#0b5f85" stroke-width="0.6" stroke-linejoin="round" />
<path d="M1169 67 C1176 69,1186 65,1193 67 C1191 76,1195 84,1193 93 C1186 91,1176 95,1169 93 C1171 84,1167 76,1169 67 Z" fill="url(#gF)" stroke="#0b5f85" stroke-width="0.8" stroke-linejoin="round" stroke-linecap="round" />
<rect x="1172.5" y="70.0" width="3.800" height="5.400" rx=".8" fill="#ffd93a" stroke="#a8780c" stroke-width=".5"/>
<rect x="1178.8" y="70.0" width="3.800" height="5.400" rx=".8" fill="#ffd93a" stroke="#a8780c" stroke-width=".5"/>
<rect x="1185.1" y="70.0" width="3.800" height="5.400" rx=".8" fill="#ffd93a" stroke="#a8780c" stroke-width=".5"/>
<rect x="1172.5" y="77.7" width="3.800" height="5.400" rx=".8" fill="#ffd93a" stroke="#a8780c" stroke-width=".5"/>
<rect x="1178.8" y="77.7" width="3.800" height="5.400" rx=".8" fill="#ffd93a" stroke="#a8780c" stroke-width=".5"/>
<rect x="1185.1" y="77.7" width="3.800" height="5.400" rx=".8" fill="#ffd93a" stroke="#a8780c" stroke-width=".5"/>
<rect x="1172.5" y="85.4" width="3.800" height="5.400" rx=".8" fill="#ffd93a" stroke="#a8780c" stroke-width=".5"/>
<rect x="1178.8" y="85.4" width="3.800" height="5.400" rx=".8" fill="#ffd93a" stroke="#a8780c" stroke-width=".5"/>
<rect x="1185.1" y="85.4" width="3.800" height="5.400" rx=".8" fill="#ffd93a" stroke="#a8780c" stroke-width=".5"/>
<rect x="1243.0" y="68.5" width="4.200" height="4.200" rx="1" fill="#cfeaf6" stroke="#3a8fc0" stroke-width="1"/>
<rect x="1251.5" y="68.5" width="4.200" height="4.200" rx="1" fill="#cfeaf6" stroke="#3a8fc0" stroke-width="1"/>
<rect x="1260.0" y="68.5" width="4.200" height="4.200" rx="1" fill="#cfeaf6" stroke="#3a8fc0" stroke-width="1"/>
<rect x="1243.0" y="77.0" width="4.200" height="4.200" rx="1" fill="#cfeaf6" stroke="#3a8fc0" stroke-width="1"/>
<rect x="1251.5" y="77.0" width="4.200" height="4.200" rx="1" fill="#cfeaf6" stroke="#3a8fc0" stroke-width="1"/>
<rect x="1260.0" y="77.0" width="4.200" height="4.200" rx="1" fill="#cfeaf6" stroke="#3a8fc0" stroke-width="1"/>
<rect x="1243.0" y="85.5" width="4.500" height="4.500" fill="#c8282c"/>
<rect x="1251.5" y="85.5" width="4.200" height="4.200" rx="1" fill="#cfeaf6" stroke="#3a8fc0" stroke-width="1"/>
<rect x="1260.0" y="85.5" width="4.200" height="4.200" rx="1" fill="#cfeaf6" stroke="#3a8fc0" stroke-width="1"/>
<path d="M1282 74 C1282 68,1288 64,1290 66 L1290 85 C1288 88,1284 88,1282 85 Z" fill="url(#gCy)" stroke="#0b5f85" stroke-width="0.7" stroke-linejoin="round" stroke-linecap="round" />
<path d="M1300 74 C1300 68,1306 64,1308 66 L1308 85 C1306 88,1302 88,1300 85 Z" fill="url(#gCy)" stroke="#0b5f85" stroke-width="0.7" stroke-linejoin="round" stroke-linecap="round" />
<circle cx="1283" cy="85.500" r="2.200" fill="#c8282c"/><circle cx="1300.500" cy="85.500" r="2.200" fill="#c8282c"/>
<path d="M1283 92 L1303 92" fill="none" stroke="#c8282c" stroke-width="2.6" stroke-linejoin="round" stroke-linecap="round" />
<polygon points="1302.0,88.5 1309.5,92.0 1302.0,95.5" fill="#c8282c" stroke="#c8282c" stroke-width="0.3" stroke-linejoin="round" />
<path d="M1321 74 C1321 68,1327 64,1329 66 L1329 85 C1327 88,1323 88,1321 85 Z" fill="url(#gW)" stroke="#bbb" stroke-width="0.7" stroke-linejoin="round" stroke-linecap="round" />
<path d="M1339 74 C1339 68,1345 64,1347 66 L1347 85 C1345 88,1341 88,1339 85 Z" fill="url(#gCy)" stroke="#0b5f85" stroke-width="0.7" stroke-linejoin="round" stroke-linecap="round" />
<circle cx="1322" cy="85.500" r="2.200" fill="#c8282c"/><circle cx="1339.500" cy="85.500" r="2.200" fill="#c8282c"/>
<path d="M1322 92 L1342 92" fill="none" stroke="#c8282c" stroke-width="2.6" stroke-linejoin="round" stroke-linecap="round" />
<polygon points="1341.0,88.5 1348.5,92.0 1341.0,95.5" fill="#c8282c" stroke="#c8282c" stroke-width="0.3" stroke-linejoin="round" />
<path d="M1373.500 66 L1373.500 94" fill="none" stroke="#3a9fd0" stroke-width="1.8" stroke-linejoin="round" stroke-linecap="round" />
<rect x="1364" y="77.500" width="4.500" height="4.500" fill="#c8282c"/><rect x="1378.500" y="77.800" width="4" height="4" rx=".8" fill="#cfeaf6" stroke="#3a8fc0" stroke-width=".9"/>
<path d="M1406 70 L1406 90" fill="none" stroke="#c8282c" stroke-width="2.4" stroke-linejoin="round" stroke-linecap="round" />
<polygon points="1402.5,71.0 1406.0,64.5 1409.5,71.0" fill="#c8282c" stroke="#c8282c" stroke-width="0.3" stroke-linejoin="round" />
<polygon points="1402.5,89.0 1406.0,95.5 1409.5,89.0" fill="#c8282c" stroke="#c8282c" stroke-width="0.3" stroke-linejoin="round" />
<path d="M1416 78 C1416 68,1426 62,1429 66 L1429 90 C1426 97,1418 97,1416 92 Z" fill="#f2f2f2" stroke="#999" stroke-width="0.7" stroke-linejoin="round" stroke-linecap="round" stroke-dasharray="1.500 1"/>
<path d="M1418 82 C1418 75,1424 71,1427 74 L1427 88 C1425 93,1420 93,1418 90 Z" fill="url(#gCy)" stroke="#0b5f85" stroke-width="0.7" stroke-linejoin="round" stroke-linecap="round" />
<rect x="1458.500" y="66.500" width="27" height="27" fill="#dff0f8" stroke="#2a8fc0" stroke-width="1.800"/>
<rect x="1473" y="68" width="11.500" height="11.500" fill="#eef6fa" stroke="#2a8fc0" stroke-width="1.200"/>
<path d="M1458.500 80.500 L1473 80.500 L1473 93" fill="none" stroke="#2a8fc0" stroke-width="1" stroke-linejoin="round" stroke-linecap="round" />
<circle cx="1472.500" cy="80" r="2" fill="#c8282c"/>
<text x="1462" y="78" font-family="Liberation Sans,sans-serif" font-size="9.500" font-weight="bold" fill="#c8282c">3</text><text x="1462" y="91.500" font-family="Liberation Sans,sans-serif" font-size="9.500" font-weight="bold" fill="#c8282c">1</text><text x="1474.500" y="91.500" font-family="Liberation Sans,sans-serif" font-size="9.500" font-weight="bold" fill="#c8282c">2</text>
<polygon points="1518.0,81.0 1535.0,74.0 1535.0,88.0 1520.0,94.0" fill="url(#gT)" stroke="#2a8fc0" stroke-width="0.8" stroke-linejoin="round" />
<polygon points="1518.0,81.0 1526.0,77.5 1526.0,84.0 1519.0,87.0" fill="#b8e6f6" stroke="#2a8fc0" stroke-width="0.5" stroke-linejoin="round" />
<path d="M1531 69 C1533 66,1538 66,1541 68 L1544 69 L1544 72 L1539 73.500 C1536 75,1532 73,1531 69 Z" fill="#f0b86a" stroke="#8a5a20" stroke-width="0.6" stroke-linejoin="round" stroke-linecap="round" />
<rect x="1543.500" y="67.500" width="2.500" height="6" fill="#2a5a8a"/><circle cx="1534.500" cy="74" r="1.600" fill="#c8282c"/>
<path d="M1576.500 66 L1576.500 86 L1597 77 M1576.500 86 L1597 94" fill="none" stroke="#2a9fd0" stroke-width="2.4" stroke-linejoin="round" stroke-linecap="round" />
<path d="M1576.500 66 L1576.500 86 L1597 77 M1576.500 86 L1597 94" fill="none" stroke="#0b6a93" stroke-width="0.5" stroke-linejoin="round" stroke-linecap="round" />
<circle cx="1576.500" cy="86" r="2.400" fill="#c8282c"/>
</svg>
<div class="abs" id="lp"><span class="hdr">Manager</span></div>
<div class="abs" id="ltab"></div>
<div class="abs" id="lstrip"></div>
<div class="abs" id="combo">显示常用</div>
<div class="abs" id="fbtn"></div>
<div class="abs" id="tree">
<div class="tr alt" style="top:0px"><i class="hc"></i><svg class="ico" style="left:29px;top:0" width="20" height="18"><use href="#i-s"/></svg><span class="tl tl g" style="left:52px">草图2</span></div>
<div class="tr" style="top:18px"><i class="hc"></i><svg class="ico" style="left:29px;top:0" width="20" height="18"><use href="#i-s"/></svg><span class="tl tl g" style="left:52px">草图3</span></div>
<div class="tr alt" style="top:36px"><i class="hc"></i><svg class="ico" style="left:29px;top:0" width="20" height="18"><use href="#i-c"/></svg><span class="tl tl" style="left:52px">拉伸5_凸台</span></div>
<div class="tr" style="top:54px"><i class="hc"></i><svg class="ico" style="left:29px;top:0" width="20" height="18"><use href="#i-c"/></svg><span class="tl tl" style="left:52px">标记折弯3</span></div>
<div class="tr alt" style="top:72px"><i class="hc"></i><svg class="ico" style="left:29px;top:0" width="20" height="18"><use href="#i-c"/></svg><span class="tl tl" style="left:52px">标记折弯4</span></div>
<div class="tr" style="top:90px"><i class="hc"></i><svg class="ico" style="left:29px;top:0" width="20" height="18"><use href="#i-c"/></svg><span class="tl tl" style="left:52px">展开1</span></div>
<div class="tr alt" style="top:108px"><i class="hc"></i><svg class="ico" style="left:29px;top:0" width="20" height="18"><use href="#i-s"/></svg><span class="tl tl g" style="left:52px">草图5</span></div>
<div class="tr" style="top:126px"><i class="hc"></i><svg class="ico" style="left:29px;top:0" width="20" height="18"><use href="#i-c"/></svg><span class="tl tl" style="left:52px">拉伸7_凸台</span></div>
<div class="tr alt" style="top:144px"><i class="hc"></i><svg class="ico" style="left:29px;top:0" width="20" height="18"><use href="#i-s"/></svg><span class="tl tl g" style="left:52px">草图6</span></div>
<div class="tr" style="top:162px"><i class="hc"></i><svg class="ico" style="left:29px;top:0" width="20" height="18"><use href="#i-s"/></svg><span class="tl tl g" style="left:52px">草图8</span></div>
<div class="tr alt" style="top:180px"><i class="hc"></i><svg class="ico" style="left:29px;top:0" width="20" height="18"><use href="#i-c"/></svg><span class="tl tl" style="left:52px">拉伸8_凸台</span></div>
<div class="tr" style="top:198px"><i class="hc"></i><svg class="ico" style="left:29px;top:0" width="20" height="18"><use href="#i-c"/></svg><span class="tl tl" style="left:52px">拉伸9_凸台</span></div>
<div class="tr alt" style="top:216px"><i class="hc"></i><svg class="ico" style="left:29px;top:0" width="20" height="18"><use href="#i-c"/></svg><span class="tl tl" style="left:52px">添加弯边1</span></div>
<div class="tr" style="top:234px"><i class="hc"></i><svg class="ico" style="left:29px;top:0" width="20" height="18"><use href="#i-c"/></svg><span class="tl tl" style="left:52px">添加弯边2</span></div>
<div class="tr alt" style="top:252px"><i class="hc"></i><svg class="ico" style="left:29px;top:0" width="20" height="18"><use href="#i-c"/></svg><span class="tl tl" style="left:52px">添加弯边3</span></div>
<div class="tr" style="top:270px"><i class="hc"></i><svg class="ico" style="left:29px;top:0" width="20" height="18"><use href="#i-c"/></svg><span class="tl tl" style="left:52px">添加弯边4</span></div>
<div class="tr alt" style="top:288px"><i class="hc"></i><svg class="ico" style="left:29px;top:0" width="20" height="18"><use href="#i-s"/></svg><span class="tl tl g" style="left:52px">草图9</span></div>
<div class="tr" style="top:306px"><i class="hc"></i><svg class="ico" style="left:29px;top:0" width="20" height="18"><use href="#i-c"/></svg><span class="tl tl" style="left:52px">拉伸10_切除</span></div>
<div class="tr alt" style="top:324px"><i class="hc"></i><svg class="ico" style="left:29px;top:0" width="20" height="18"><use href="#i-s"/></svg><span class="tl tl g" style="left:52px">草图17</span></div>
<div class="tr" style="top:342px"><i class="hc"></i><svg class="ico" style="left:29px;top:0" width="20" height="18"><use href="#i-c"/></svg><span class="tl tl" style="left:52px">拉伸13_切除</span></div>
<div class="tr alt" style="top:360px"><i class="hc"></i><svg class="ico" style="left:29px;top:0" width="20" height="18"><use href="#i-s"/></svg><span class="tl tl g" style="left:52px">草图11</span></div>
<div class="tr" style="top:378px"><i class="hc"></i><svg class="ico" style="left:29px;top:0" width="20" height="18"><use href="#i-p"/></svg><span class="tl tl" style="left:52px">分割1</span></div>
<div class="tr alt" style="top:396px"><i class="hc"></i><svg class="ico" style="left:29px;top:0" width="20" height="18"><use href="#i-p"/></svg><span class="tl tl" style="left:52px">分割2</span></div>
<div class="tr" style="top:414px"><i class="hc"></i><svg class="ico" style="left:29px;top:0" width="20" height="18"><use href="#i-c"/></svg><span class="tl tl" style="left:52px">添加弯边5</span></div>
<div class="tr alt" style="top:432px"><i class="hc"></i><svg class="ico" style="left:29px;top:0" width="20" height="18"><use href="#i-s"/></svg><span class="tl tl g" style="left:52px">草图12</span></div>
<div class="tr" style="top:450px"><i class="hc"></i><svg class="ico" style="left:29px;top:0" width="20" height="18"><use href="#i-p"/></svg><span class="tl tl" style="left:52px">分割3</span></div>
<div class="tr alt" style="top:468px"><i class="hc"></i><svg class="ico" style="left:29px;top:0" width="20" height="18"><use href="#i-p"/></svg><span class="tl tl" style="left:52px">分割4</span></div>
<div class="tr" style="top:486px"><i class="hc"></i><svg class="ico" style="left:29px;top:0" width="20" height="18"><use href="#i-c"/></svg><span class="tl tl" style="left:52px">添加弯边6</span></div>
<div class="tr alt" style="top:504px"><i class="hc"></i><svg class="ico" style="left:29px;top:0" width="20" height="18"><use href="#i-s"/></svg><span class="tl tl g" style="left:52px">草图13</span></div>
<div class="tr" style="top:522px"><i class="hc"></i><svg class="ico" style="left:29px;top:0" width="20" height="18"><use href="#i-c"/></svg><span class="tl tl" style="left:52px">拉伸12_切除</span></div>
<div class="tr alt" style="top:540px"><i class="hc"></i><svg class="ico" style="left:29px;top:0" width="20" height="18"><use href="#i-s"/></svg><span class="tl tl g" style="left:52px">草图14</span></div>
<div class="tr" style="top:558px"><i class="hc"></i><svg class="ico" style="left:29px;top:0" width="20" height="18"><use href="#i-c"/></svg><span class="tl tl" style="left:52px">加凹陷1</span></div>
<div class="tr alt" style="top:576px"><i class="hc"></i><svg class="ico" style="left:29px;top:0" width="20" height="18"><use href="#i-s"/></svg><span class="tl tl g" style="left:52px">草图15</span></div>
<div class="tr" style="top:594px"><i class="hc"></i><svg class="ico" style="left:29px;top:0" width="20" height="18"><use href="#i-c"/></svg><span class="tl tl" style="left:52px">加凹陷2</span></div>
<div class="tr alt" style="top:612px"><i class="hc"></i><svg class="ico" style="left:29px;top:0" width="20" height="18"><use href="#i-s"/></svg><span class="tl tl g" style="left:52px">草图16</span></div>
<div class="tr" style="top:630px"><i class="hc"></i><svg class="ico" style="left:29px;top:0" width="20" height="18"><use href="#i-c"/></svg><span class="tl tl" style="left:52px">加凹陷3</span></div>
<div class="tr alt" style="top:648px"><i class="hc"></i><svg class="ico" style="left:29px;top:0" width="20" height="18"><use href="#i-f"/></svg><span class="tl tl" style="left:52px">圆角4</span></div>
<div class="tr" style="top:666px"><i class="hc"></i><svg class="ico" style="left:29px;top:0" width="20" height="18"><use href="#i-c"/></svg><span class="tl tl" style="left:52px">折叠3</span></div>
<div class="tr alt" style="top:684px"><i class="hc"></i><svg class="ico" style="left:29px;top:0" width="20" height="18"><use href="#i-s"/></svg><span class="tl tl g en" style="left:52px">Sketch18</span></div>
<div class="tr" style="top:702px"><i class="hc"></i><svg class="ico" style="left:29px;top:0" width="20" height="18"><use href="#i-c"/></svg><span class="tl tl en" style="left:52px">AddDimple4</span></div>
<div class="tr alt" style="top:720px"><i class="hc"></i><svg class="ico" style="left:29px;top:0" width="20" height="18"><use href="#i-a"/></svg><span class="tl tl r" style="left:52px">----- 建模停止 -----</span></div>
</div>
<div class="abs" id="vline"></div>
<div class="abs" id="sb"></div><div class="abs" id="sbthumb"></div>
<svg class="abs" style="left:291px;top:253px" width="16" height="750"><path d="M4.500 11 L8 7 L11.500 11 Z" fill="#7a7a7a"/><path d="M4.500 739 L8 743 L11.500 739 Z" fill="#8a8a8a"/><path d="M5 437.500 L11 437.500 M5 440 L11 440 M5 442.500 L11 442.500" stroke="#888" stroke-width="1"/></svg>
<div class="abs" id="dochdr"></div>
<div class="abs" id="doctab"><span class="tx">Flared Hole.Z3 - [Shell]</span></div>
<div class="abs" id="view"></div>
<span class="msg" style="top:212px">按下&lt;F2&gt;动态的观察</span>
<span class="msg" style="top:230px">&lt;F8&gt;或者&lt;Shift-roll&gt; 查找下一个有效的过滤器设置.</span>
<svg class="abs" style="left:640px;top:184px" width="720" height="32" viewBox="640 184 720 32">
<defs>
<linearGradient id="tT" x1="0" y1="0" x2="1" y2="1"><stop offset="0" stop-color="#9fe6f6"/><stop offset="1" stop-color="#2aa5cf"/></linearGradient>
<linearGradient id="tS" x1="0" y1="0" x2="1" y2="1"><stop offset="0" stop-color="#1b8dba"/><stop offset="1" stop-color="#0b6a93"/></linearGradient>
<linearGradient id="tO" x1="0" y1="0" x2="0" y2="1"><stop offset="0" stop-color="#fde6b0"/><stop offset=".5" stop-color="#f9c25a"/><stop offset="1" stop-color="#fbd98a"/></linearGradient>
<linearGradient id="tMon" x1="0" y1="0" x2="0" y2="1"><stop offset="0" stop-color="#aab4c8"/><stop offset=".5" stop-color="#4a5a7a"/><stop offset="1" stop-color="#8a98b0"/></linearGradient>
</defs>
<!-- exit -->
<rect x="653.500" y="191.500" width="11" height="16" rx="1.500" fill="#0e5f8c" stroke="#0a4a70" stroke-width=".8"/>
<path d="M660 194.500 L658.500 198 L656 199.500 M658.500 198 L660.500 201 L659 205 M660.500 201 L662.500 202.500 M659 197.500 L662 198.500" stroke="#fff" stroke-width="1.300" fill="none" stroke-linecap="round"/>
<circle cx="660.800" cy="193.700" r="1.100" fill="#fff"/>
<path d="M662 207.500 L666.500 207.500 L666.500 205" stroke="#7ab8d8" stroke-width="1" fill="none"/>
<!-- eraser -->
<path d="M681 204 L691 193 L695.500 195.500 L686 207.500 Z" fill="#f4f4f4" stroke="#b0b0b0" stroke-width=".6"/>
<path d="M681 204 L684.500 200 L689.500 203 L686 207.500 Z" fill="#d8303a"/>
<path d="M689 195 L691 193 L695.500 195.500 L693.500 198 Z" fill="#f0b840"/>
<!-- box yellow top -->
<path d="M707.500 199 L716 195 L724.500 198.500 L724.500 204.500 L716 208 L707.500 205 Z" fill="#2aa5cf" stroke="#0b6a93" stroke-width=".6"/>
<path d="M707.500 199 L716 195 L724.500 198.500 L716 202 Z" fill="#f6e04a" stroke="#b98214" stroke-width=".5"/>
<path d="M707.500 199 L716 202 L716 208 L707.500 205 Z" fill="#c8ecf8" stroke="#0b6a93" stroke-width=".5"/>
<path d="M716 192 L716 198" stroke="#444" stroke-width="1"/><circle cx="716" cy="198.500" r="1.200" fill="#d8a81e"/>
<!-- color bars -->
<rect x="735" y="198.500" width="3.200" height="9.500" fill="#d8281c"/><rect x="738.200" y="198.500" width="3" height="9.500" fill="#e8a020"/><rect x="741.200" y="198.500" width="3" height="9.500" fill="#2e9a3a"/><rect x="744.200" y="198.500" width="3.300" height="9.500" fill="#2a4ab8"/>
<path d="M744.500 191.500 L753 191.500 L750 195.500 L750 199.500 L747.800 199.500 L747.800 195.500 Z" fill="#2a9fd8" stroke="#1a78b0" stroke-width=".5"/>
<text x="784.500" y="204.500" font-family="Liberation Sans,Noto Sans CJK SC,sans-serif" font-size="12.500" fill="#000">全部</text>
<!-- highlighted -->
<rect x="838.500" y="188.500" width="24" height="23" rx="2" fill="url(#tO)" stroke="#d8962a" stroke-width="1"/>
<path d="M841.500 197.500 L846 193 L849 194.500 L852.500 200 L858 197 L860 202 L848 207.500 L841.500 202 Z" fill="#2a9fc8" stroke="#0b5f85" stroke-width=".7"/>
<path d="M846 193 L849 194.500 L852.500 200 L858 197 L860 202 L848 203.500 Z" fill="#f6e25a" stroke="#8a7a10" stroke-width=".5"/>
<path d="M848.500 191.500 L858.500 191.500 L855 195 L855 198.500 L852.500 198.500 L852.500 195 Z" fill="#2aa5d8" stroke="#0b5f85" stroke-width=".5"/>
<!-- blue cube -->
<path d="M870 195.500 L879.500 192 L887 195 L887 203.500 L878 208 L870 204 Z" fill="url(#tS)"/>
<path d="M870 195.500 L879.500 192 L887 195 L878 199 Z" fill="#a8e8f8"/>
<path d="M870 195.500 L878 199 L878 208 L870 204 Z" fill="#3ab8e0"/>
<path d="M892.500 198 L898.500 198 L895.500 201.500 Z" fill="#666"/>
<!-- white cube -->
<path d="M909 195.500 L918.500 191.500 L926.500 195 L926.500 203.500 L917 208.500 L909 204 Z" fill="#e4e8ec" stroke="#a8acb0" stroke-width=".7"/>
<path d="M909 195.500 L918.500 191.500 L926.500 195 L917 199.500 Z" fill="#fff" stroke="#a8acb0" stroke-width=".6"/>
<path d="M909 195.500 L917 199.500 L917 208.500 L909 204 Z" fill="#f6f8fa" stroke="#a8acb0" stroke-width=".6"/>
<path d="M932.500 198 L938.500 198 L935.500 201.500 Z" fill="#666"/>
<!-- orange wire cube -->
<path d="M950 195.500 L958 192 L966 195.500 L966 204 L958 208 L950 204 Z" fill="#f8c040" stroke="#c87a10" stroke-width="1"/>
<path d="M950 195.500 L958 199.500 L966 195.500 M958 192 L958 208 M950 204 L958 200 L966 204" fill="none" stroke="#c87a10" stroke-width=".9"/>
<path d="M972.500 198 L978.500 198 L975.500 201.500 Z" fill="#666"/>
<!-- zoom-ish icon -->
<rect x="990" y="192.500" width="14" height="14" rx="1" fill="#5ab8d8" stroke="#3a98c0" stroke-width=".8"/>
<circle cx="997" cy="199.500" r="5" fill="#e8d89a" stroke="#b8a860" stroke-width="1"/><circle cx="997.500" cy="199.500" r="2.400" fill="#f4f0d0"/>
<path d="M1012.500 198 L1018.500 198 L1015.500 201.500 Z" fill="#666"/>
<!-- zoom window -->
<rect x="1029.500" y="192" width="16" height="15.500" fill="#f2f8fc" stroke="#7ab0d0" stroke-width="1"/>
<path d="M1039 194.500 C1041.500 195,1043 196.500,1043 199.500 M1032 198 L1032 203.500" stroke="#9ac4e0" stroke-width="1" fill="none"/>
<rect x="1032" y="202.500" width="4.500" height="3" fill="#2a7ab0"/>
<!-- dimension -->
<path d="M1060.500 191.500 L1060.500 203 M1072.500 191.500 L1072.500 203" stroke="#2a8fc8" stroke-width="1.600"/>
<path d="M1062 197 L1071 197" stroke="#2a8fc8" stroke-width="1.200"/><path d="M1062 197 L1064 195.500 L1064 198.500 Z M1071 197 L1069 195.500 L1069 198.500 Z" fill="#2a8fc8"/>
<path d="M1060 206.500 L1073 206.500" stroke="#d8282c" stroke-width="1.600"/>
<path d="M1080.500 198 L1086.500 198 L1083.500 201.500 Z" fill="#666"/>
<!-- monitor -->
<rect x="1097" y="191.500" width="18" height="13" fill="url(#tMon)" stroke="#8a8e94" stroke-width="1"/>
<path d="M1101 205 L1111 205 L1113 208 L1099 208 Z" fill="#9a9ea4"/>
<path d="M1120.500 198 L1126.500 198 L1123.500 201.500 Z" fill="#666"/>
<!-- swatches -->
<rect x="1134.500" y="189.500" width="24" height="20.500" rx="1.500" fill="#f0f0f0" stroke="#a0a4a8" stroke-width="1"/><rect x="1136.500" y="191.500" width="20" height="16.500" fill="#000"/>
<rect x="1162.500" y="189.500" width="24" height="20.500" rx="1.500" fill="#f0f0f0" stroke="#a0a4a8" stroke-width="1"/><rect x="1164.500" y="191.500" width="20" height="16.500" fill="#97c7e2"/>
<!-- teal box -->
<path d="M1193.500 198 L1202 193.500 L1211 197 L1211 201.500 L1202 206.500 L1193.500 202 Z" fill="#1a8a98" stroke="#0b5f70" stroke-width=".6"/>
<path d="M1193.500 198 L1202 193.500 L1211 197 L1202 201.500 Z" fill="#3ac0c8"/>
<path d="M1193.500 198 L1202 201.500 L1202 206.500 L1193.500 202 Z" fill="#e8f4f6" stroke="#0b5f70" stroke-width=".4"/>
<path d="M1216.500 198 L1222.500 198 L1219.500 201.500 Z" fill="#666"/>
<!-- layer combo -->
<rect x="1230" y="189.500" width="100" height="21" fill="#ebebeb"/>
<rect x="1330.500" y="189.500" width="15.500" height="21" fill="#f0f0f0" stroke="#9a9a9a" stroke-width="1"/>
<path d="M1334.500 197 L1340.500 197 L1337.500 200.500 Z" fill="#555"/>
<path d="M1241.500 192.500 C1238 192.500,1236.500 197,1239.500 200.500 L1239.500 203.500 L1243.500 203.500 L1243.500 200.500 C1246.500 197,1245 192.500,1241.500 192.500 Z" fill="#fffbd0" stroke="#555" stroke-width=".9"/>
<path d="M1239.800 205 L1243.200 205 M1240.300 206.500 L1242.700 206.500" stroke="#555" stroke-width="1"/>
<circle cx="1259" cy="200" r="6.500" fill="#fbe96a" stroke="#b8a020" stroke-width="1.200"/>
<path d="M1252.500 194.500 L1254 193.500 M1265.500 194.500 L1264 193.500 M1252.500 206 L1254 207 M1265.500 206 L1264 207" stroke="#d8c040" stroke-width="1"/>
<text x="1269" y="204" font-family="Liberation Mono,monospace" font-size="12" fill="#111" textLength="54" lengthAdjust="spacingAndGlyphs">Layer0000</text>
</svg>

<svg class="abs" style="left:316px;top:185px" width="1362" height="822" viewBox="316 185 1362 822">
<defs>
<linearGradient id="mFil" gradientUnits="userSpaceOnUse" x1="660" y1="500" x2="648" y2="523"><stop offset="0" stop-color="#7aa3b8"/><stop offset=".18" stop-color="#87aec1"/><stop offset=".34" stop-color="#6e97ac"/><stop offset=".5" stop-color="#82aabd"/><stop offset=".85" stop-color="#7fa7bb"/><stop offset="1" stop-color="#7199ae"/></linearGradient>
<linearGradient id="mFr" gradientUnits="userSpaceOnUse" x1="650" y1="525" x2="633" y2="558"><stop offset="0" stop-color="#6c93a8"/><stop offset=".5" stop-color="#7097ac"/><stop offset="1" stop-color="#7299ae"/></linearGradient>
<linearGradient id="mCyl" x1="0" y1="0" x2="1" y2="0"><stop offset="0" stop-color="#5f8296"/><stop offset=".45" stop-color="#e8f2f6"/><stop offset="1" stop-color="#6a8ea2"/></linearGradient>
<linearGradient id="mStep" gradientUnits="userSpaceOnUse" x1="960" y1="600" x2="972" y2="632"><stop offset="0" stop-color="#7aa3b8"/><stop offset=".5" stop-color="#8fb3c5"/><stop offset="1" stop-color="#7298ad"/></linearGradient>
</defs>
<polygon points="860.0,341.0 941.0,383.8 1048.5,443.8 1052.2,447.0 1073.5,439.5 1084.8,441.5 1090.5,448.8 1092.2,470.0 1103.5,474.5 1308.5,580.0 1336.0,597.5 1344.0,606.2 1348.0,617.5 1351.0,670.0 1336.0,677.0 1303.5,660.0 1313.5,645.0 1317.2,632.5 1314.0,622.5 1307.2,618.0 1301.0,618.8 1291.0,632.5 1278.5,642.0 1266.0,640.0 1131.0,567.5 1127.2,567.5 1119.8,537.5 1113.5,526.2 1111.8,525.5 1079.5,570.5 1033.8,591.8 1032.2,588.0 1035.5,610.0 1037.2,658.8 1041.0,667.5 1048.5,674.5 1147.2,730.0 1152.2,735.0 1152.2,745.0 1021.0,791.2 1016.0,794.5 1006.5,794.0 1001.0,790.0 941.0,757.5 897.5,735.0 887.5,722.5 820.0,685.0 810.0,677.5 805.0,660.0 801.2,646.2 785.0,635.0 627.5,560.0 555.0,517.5 546.2,507.5 545.0,470.0 548.8,458.8 558.8,450.6" fill="#7aa3b8" stroke="#081218" stroke-width="1.2" stroke-linejoin="round" />
<polygon points="860.0,341.0 941.0,383.8 1048.5,443.8 1050.5,445.8 966.0,398.0 870.0,343.8" fill="#86adc1" stroke="#081218" stroke-width="0.8" stroke-linejoin="round" />
<polygon points="558.8,450.6 796.2,576.2 783.8,593.0 780.0,597.5 545.0,473.1 545.0,470.0 548.8,458.8" fill="url(#mFil)" stroke="none" stroke-width="0" stroke-linejoin="round" />
<polygon points="545.0,473.1 780.0,597.5 801.2,646.2 782.5,628.0 546.2,507.5" fill="url(#mFr)" stroke="none" stroke-width="0" stroke-linejoin="round" />
<polygon points="546.2,507.5 782.5,628.0 797.5,641.2 785.0,635.0 627.5,560.0 555.0,517.5" fill="#789fb4" stroke="none" stroke-width="0" stroke-linejoin="round" />
<polyline points="558.8,450.6 796.2,576.2" fill="none" stroke="#081218" stroke-width="1" stroke-linejoin="round" stroke-linecap="round" />
<polyline points="545.0,473.1 780.0,597.5" fill="none" stroke="#081218" stroke-width="1" stroke-linejoin="round" stroke-linecap="round" />
<polyline points="546.2,507.5 782.5,628.0 795.0,635.0" fill="none" stroke="#081218" stroke-width="1" stroke-linejoin="round" stroke-linecap="round" />
<polyline points="550.0,513.1 637.5,560.0 784.0,632.5" fill="none" stroke="#081218" stroke-width="0.7" stroke-linejoin="round" stroke-linecap="round" />
<polygon points="782.5,628.0 801.2,646.2 795.0,635.0" fill="#607d8d" stroke="#081218" stroke-width="0.7" stroke-linejoin="round" />
<polygon points="780.0,597.5 783.8,595.5 992.5,700.0 1013.5,715.5 1020.5,720.5 1023.5,730.0 1024.2,785.0 1021.0,791.2 1016.0,794.5 1006.5,794.0 1001.0,790.0 899.1,737.6 891.7,732.3 885.4,721.7 820.0,685.0 810.0,677.5 805.0,660.0 801.2,646.2" fill="#769eb3" stroke="none" stroke-width="0" stroke-linejoin="round" />
<polygon points="885.4,721.7 891.7,732.3 899.1,737.6 1003.7,793.0 1003.4,784.3 986.8,774.5 899.1,729.1" fill="#7099ae" stroke="#081218" stroke-width="0.8" stroke-linejoin="round" />
<polygon points="885.4,721.7 891.7,732.3 899.1,737.6 899.1,729.1" fill="#6a8da1" stroke="#081218" stroke-width="0.7" stroke-linejoin="round" />
<polygon points="783.8,595.5 992.5,700.0 1013.5,715.5 1013.2,715.5 1023.6,712.9 1005.0,700.0 795.5,590.0 790.0,591.5" fill="#86adc0" stroke="#081218" stroke-width="0.8" stroke-linejoin="round" />
<polygon points="1013.2,715.5 1023.6,712.9 1030.1,724.0 1031.4,727.9 1034.1,780.1 1033.4,783.0 1024.9,786.0 1023.6,763.2 1021.0,726.6" fill="#6c90a4" stroke="#081218" stroke-width="0.8" stroke-linejoin="round" />
<polygon points="1013.2,715.5 1023.6,712.9 1030.1,724.0 1021.6,730.5 1018.4,721.4" fill="#9cbdcc" stroke="#081218" stroke-width="0.6" stroke-linejoin="round" />
<polygon points="1024.9,786.0 1033.4,783.0 1034.3,787.3 1023.6,791.2" fill="#5c7a8a" stroke="#081218" stroke-width="0.6" stroke-linejoin="round" />
<polygon points="1003.4,784.3 1017.7,793.2 1013.2,794.1 1006.0,793.9 1003.4,791.2" fill="#dfeaef" stroke="#081218" stroke-width="0.7" stroke-linejoin="round" />
<polyline points="1021.0,726.6 1023.6,763.2 1023.0,791.2" fill="none" stroke="#081218" stroke-width="1" stroke-linejoin="round" stroke-linecap="round" />
<path d="M 946.7 753.9 L 961.5 757.1 L 972.0 750.2 L 981.5 739.7 Q 986.8 731.7 992.1 731.2 Q 999.5 737.6 1001.6 751.3 Q 997.4 762.9 986.8 775.1 Z" fill="#80a8bc" stroke="#081218" stroke-width="0.9" stroke-linejoin="round" stroke-linecap="round" />
<polygon points="975.7,747.6 986.8,732.5 992.1,731.7 991.0,737.0 980.5,748.3" fill="#5f7d8e" stroke="#081218" stroke-width="0.6" stroke-linejoin="round" />
<polygon points="994.7,738.1 997.9,738.1 999.0,740.7 995.8,739.7" fill="#fff" stroke="none" stroke-width="0" stroke-linejoin="round" />
<polyline points="942.4,703.2 987.9,729.1" fill="none" stroke="#1a2a34" stroke-width="0.9" stroke-linejoin="round" stroke-linecap="round" stroke-dasharray=".9 6.500"/>
<path d="M 832.5 646.2 Q 826.2 647.5 828.0 660.0 L 830.0 665.0 L 922.5 717.5 Q 932.5 722.5 937.0 717.5 Q 939.5 707.5 932.5 698.8 L 840.0 647.5 Z" fill="#83aabe" stroke="#081218" stroke-width="1" stroke-linejoin="round" stroke-linecap="round" />
<path d="M 835.5 649.5 Q 830.0 651.2 831.5 661.2 L 925.0 713.0 Q 932.5 701.2 930.0 700.0 Z" fill="#7aa3b8" stroke="#081218" stroke-width="0.8" stroke-linejoin="round" stroke-linecap="round" />
<polyline points="831.5,658.0 926.2,710.0" fill="none" stroke="#081218" stroke-width="0.7" stroke-linejoin="round" stroke-linecap="round" />
<polyline points="830.0,665.0 922.5,717.5" fill="none" stroke="#081218" stroke-width="1.3" stroke-linejoin="round" stroke-linecap="round" />
<path d="M 926.2 710.0 Q 927.5 700.0 932.0 698.2 Q 939.5 707.5 937.0 717.5 Q 930.0 722.0 926.2 710.0" fill="#8fb6c8" stroke="#081218" stroke-width="0.8" stroke-linejoin="round" stroke-linecap="round" />
<circle cx="932.0" cy="712.0" r="2.600" fill="#eaf3f7"/>
<polygon points="877.5,636.2 950.0,611.2 1025.0,585.0 1032.5,592.5 1037.5,605.0 962.5,630.0 910.0,650.0" fill="url(#mStep)" stroke="none" stroke-width="0" stroke-linejoin="round" />
<polygon points="962.5,630.0 1037.5,605.0 1038.8,660.0 966.2,682.5" fill="#68818f" stroke="#081218" stroke-width="0.8" stroke-linejoin="round" />
<polygon points="910.0,650.0 962.5,630.0 966.2,682.5 963.8,678.0" fill="#6c8898" stroke="#081218" stroke-width="0.8" stroke-linejoin="round" />
<polyline points="877.5,636.2 950.0,611.2 1025.0,585.0" fill="none" stroke="#081218" stroke-width="1" stroke-linejoin="round" stroke-linecap="round" />
<polyline points="910.0,650.0 962.5,630.0 1037.5,605.0" fill="none" stroke="#081218" stroke-width="1" stroke-linejoin="round" stroke-linecap="round" />
<path d="M 915.0 588.0 L 950.0 610.5 Q 961.2 617.5 962.5 630.0 L 966.2 682.5" fill="none" stroke="#081218" stroke-width="0.8" stroke-linejoin="round" stroke-linecap="round" />
<path d="M 915.0 588.0 Q 916.2 585.0 927.5 584.5 Q 945.0 583.8 947.5 576.2 L 949.5 570.0" fill="none" stroke="#081218" stroke-width="0.7" stroke-linejoin="round" stroke-linecap="round" />
<polygon points="966.0,682.5 1037.2,659.5 1041.0,667.5 1048.5,674.5 988.5,692.5" fill="#86acbf" stroke="none" stroke-width="0" stroke-linejoin="round" />
<polyline points="966.0,682.5 1037.2,659.5" fill="none" stroke="#081218" stroke-width="1" stroke-linejoin="round" stroke-linecap="round" />
<polyline points="988.5,692.5 1047.2,673.8" fill="none" stroke="#081218" stroke-width="0.7" stroke-linejoin="round" stroke-linecap="round" />
<polygon points="1105.0,523.8 1072.5,565.0 1025.0,584.5 1032.5,592.5 1078.8,570.0 1110.0,527.5" fill="#82a8bc" stroke="#081218" stroke-width="0.8" stroke-linejoin="round" />
<polyline points="998.8,523.8 1072.5,565.0" fill="none" stroke="#081218" stroke-width="0.8" stroke-linejoin="round" stroke-linecap="round" />
<polyline points="1063.8,495.5 1105.0,523.8" fill="none" stroke="#081218" stroke-width="0.8" stroke-linejoin="round" stroke-linecap="round" />
<polygon points="1034.7,776.9 1083.0,759.9 1149.0,735.1 1152.3,732.5 1152.3,742.3 1147.7,745.5 1084.4,769.0 1034.7,788.0" fill="#6f94a9" stroke="#081218" stroke-width="0.8" stroke-linejoin="round" />
<polyline points="1083.0,759.9 1084.4,769.0" fill="none" stroke="#081218" stroke-width="1" stroke-linejoin="round" stroke-linecap="round" />
<polyline points="1064.1,748.8 1083.0,759.9" fill="none" stroke="#081218" stroke-width="0.7" stroke-linejoin="round" stroke-linecap="round" />
<polyline points="1148.4,735.7 1147.7,745.5" fill="none" stroke="#081218" stroke-width="0.7" stroke-linejoin="round" stroke-linecap="round" />
<polygon points="1030.1,715.5 1034.1,713.5 1041.9,712.5 1051.0,714.8 1051.0,723.7 1036.0,723.7 1031.4,725.3" fill="url(#mCyl)" stroke="#081218" stroke-width="0.8" stroke-linejoin="round" />
<polygon points="1051.0,714.8 1085.7,732.5 1087.6,736.4 1080.4,740.3 1048.4,723.7 1051.0,723.7" fill="#7298ad" stroke="#081218" stroke-width="0.8" stroke-linejoin="round" />
<polygon points="1032.1,725.9 1036.0,723.7 1048.4,723.7 1080.4,740.3 1039.3,756.0 1033.4,756.6" fill="#fff" stroke="#081218" stroke-width="0.8" stroke-linejoin="round" />
<polygon points="803.0,550.0 807.5,540.0 816.2,535.0 890.0,506.2 893.8,511.2 821.2,539.2 814.5,542.5 810.8,550.0" fill="#8db2c4" stroke="#081218" stroke-width="0.8" stroke-linejoin="round" />
<polygon points="803.0,550.0 810.8,550.0 811.2,576.2 805.0,584.5 803.8,576.2" fill="#7fa6ba" stroke="#081218" stroke-width="0.8" stroke-linejoin="round" />
<linearGradient id="mWall" gradientUnits="userSpaceOnUse" x1="880" y1="520" x2="890" y2="550"><stop offset="0" stop-color="#6a8390"/><stop offset=".8" stop-color="#6b8594"/><stop offset="1" stop-color="#8ea9b7"/></linearGradient>
<polygon points="811.2,577.0 810.8,550.0 814.5,542.5 821.2,539.2 893.8,511.2 896.2,515.0 945.5,530.0 946.5,533.5" fill="url(#mWall)" stroke="#081218" stroke-width="0.8" stroke-linejoin="round" />
<polyline points="811.2,577.0 946.5,533.5" fill="none" stroke="#081218" stroke-width="1.6" stroke-linejoin="round" stroke-linecap="round" />
<polygon points="797.0,577.0 803.8,575.0 805.0,584.5 798.0,588.0" fill="#6b8b9c" stroke="#081218" stroke-width="0.7" stroke-linejoin="round" />
<path d="M 783.8 593.0 Q 786.2 582.5 796.2 576.2" fill="none" stroke="#2a2ad0" stroke-width="1" stroke-linejoin="round" stroke-linecap="round" />
<polygon points="808.7,471.2 812.5,451.2 816.2,443.7 825.0,436.2 841.2,431.2 859.9,431.2 869.9,435.0 859.9,441.2 847.4,438.7 830.0,441.2 820.0,455.0 816.2,479.9 813.7,479.9" fill="#8bb0c3" stroke="none" stroke-width="0" stroke-linejoin="round" />
<path d="M 871.2 511.1 L 813.7 479.9 Q 807.5 474.9 808.7 471.2 L 812.5 451.2 Q 815.0 440.0 825.0 436.2 Q 841.2 430.0 859.9 431.2 Q 867.4 431.9 869.9 435.0 L 937.3 472.2" fill="none" stroke="#081218" stroke-width="0.8" stroke-linejoin="round" stroke-linecap="round" />
<path d="M 816.2 479.9 L 820.0 455.0 Q 822.5 443.7 830.0 441.2 Q 847.4 437.5 859.9 441.2 L 864.9 459.3 L 871.2 468.7" fill="none" stroke="#081218" stroke-width="0.8" stroke-linejoin="round" stroke-linecap="round" />
<linearGradient id="mCone" gradientUnits="userSpaceOnUse" x1="826" y1="445" x2="866" y2="452"><stop offset="0" stop-color="#4f6c7d"/><stop offset=".45" stop-color="#8fb0c0"/><stop offset=".72" stop-color="#eaf3f7"/><stop offset="1" stop-color="#7fa4b7"/></linearGradient>
<path d="M 826.8 446.8 Q 832.5 440.0 849.9 439.4 L 859.9 441.9 L 864.9 459.7 L 849.9 462.5 Z" fill="url(#mCone)" stroke="#081218" stroke-width="0.8" stroke-linejoin="round" stroke-linecap="round" />
<polyline points="822.5,453.7 887.4,488.9" fill="none" stroke="#081218" stroke-width="1" stroke-linejoin="round" stroke-linecap="round" />
<polyline points="849.9,462.5 894.9,487.4" fill="none" stroke="#081218" stroke-width="1" stroke-linejoin="round" stroke-linecap="round" />
<polyline points="864.9,459.7 906.1,486.2" fill="none" stroke="#081218" stroke-width="0.7" stroke-linejoin="round" stroke-linecap="round" />
<polyline points="859.9,441.5 926.1,478.4" fill="none" stroke="#081218" stroke-width="1" stroke-linejoin="round" stroke-linecap="round" />
<polyline points="816.2,479.9 871.8,511.1" fill="none" stroke="#081218" stroke-width="0.7" stroke-linejoin="round" stroke-linecap="round" />
<polyline points="919.9,474.9 926.1,479.9" fill="none" stroke="#081218" stroke-width="0.7" stroke-linejoin="round" stroke-linecap="round" />
<polyline points="932.3,471.2 924.8,478.1" fill="none" stroke="#081218" stroke-width="0.7" stroke-linejoin="round" stroke-linecap="round" />
<path d="M 881.1 508.6 Q 881.8 499.9 887.4 493.7" fill="none" stroke="#081218" stroke-width="0.8" stroke-linejoin="round" stroke-linecap="round" />
<polygon points="887.4,488.7 897.4,486.4 903.6,488.7 896.8,493.7 887.4,493.0" fill="#8fb3c5" stroke="#081218" stroke-width="0.7" stroke-linejoin="round" />
<polygon points="889.3,506.4 896.1,504.9 898.6,507.6 889.9,511.4" fill="#5f7888" stroke="#081218" stroke-width="0.6" stroke-linejoin="round" />
<polygon points="890.0,499.5 895.0,495.5 945.0,521.2 945.0,530.5 896.2,515.0 891.2,508.8" fill="#7597ab" stroke="#081218" stroke-width="0.7" stroke-linejoin="round" />
<polygon points="895.0,495.5 1013.8,450.0 1017.5,450.5 1067.5,484.5 963.8,524.5 955.0,526.8 947.5,523.8 945.0,521.2" fill="#7ba4b9" stroke="#081218" stroke-width="0.9" stroke-linejoin="round" />
<polygon points="963.8,524.5 1067.5,484.5 1070.0,487.5 1066.2,493.0 965.0,531.5 962.5,532.0" fill="#7b9bad" stroke="#081218" stroke-width="0.8" stroke-linejoin="round" />
<polygon points="945.0,521.2 947.5,523.8 955.0,526.8 963.8,524.5 962.5,532.0 958.8,534.0 950.0,533.0 945.0,530.5" fill="url(#mCyl)" stroke="#081218" stroke-width="0.8" stroke-linejoin="round" />
<polygon points="1031.0,457.0 1073.5,440.0 1086.0,442.5 1090.5,448.8 1091.8,470.0 1071.0,479.2" fill="#68818f" stroke="#081218" stroke-width="0.8" stroke-linejoin="round" />
<polygon points="1071.0,479.2 1091.8,470.0 1092.2,480.0 1071.0,490.5 1066.0,492.5 1066.0,483.8" fill="#a2c0ce" stroke="#081218" stroke-width="0.8" stroke-linejoin="round" />
<polyline points="1071.0,479.2 1071.0,490.5" fill="none" stroke="#081218" stroke-width="0.7" stroke-linejoin="round" stroke-linecap="round" />
<path d="M 1093.0 470.0 Q 1106.0 467.5 1103.5 476.2 Q 1101.0 482.5 1094.0 480.0" fill="none" stroke="#2a2ad0" stroke-width="1" stroke-linejoin="round" stroke-linecap="round" />
<polygon points="1092.2,470.0 1103.5,474.5 1308.5,580.0 1336.0,597.5 1344.0,606.2 1348.0,617.5 1351.0,670.0 1336.0,677.0 1303.5,660.0 1313.5,645.0 1317.2,632.5 1314.0,622.5 1307.2,618.0 1301.0,618.8 1291.0,632.5 1278.5,642.0 1266.0,640.0 1131.0,567.5 1127.2,567.5 1119.8,537.5 1113.5,526.2 1111.8,525.5 1106.0,495.0" fill="#769eb3" stroke="none" stroke-width="0" stroke-linejoin="round" />
<polygon points="1103.5,474.5 1308.5,580.0 1336.0,597.5 1327.2,597.5 1301.0,580.0 1101.0,482.5 1094.0,480.0" fill="#7fa7bb" stroke="#081218" stroke-width="0.8" stroke-linejoin="round" />
<polygon points="1327.2,597.5 1336.0,597.5 1344.0,606.2 1348.0,617.5 1351.0,670.0 1341.0,673.8 1339.0,616.2 1334.8,605.0" fill="#6d92a7" stroke="#081218" stroke-width="0.8" stroke-linejoin="round" />
<polygon points="1341.0,673.8 1351.0,670.0 1351.0,672.5 1336.0,677.0" fill="#a9c6d3" stroke="#081218" stroke-width="0.6" stroke-linejoin="round" />
<polyline points="1339.0,616.2 1348.0,614.5" fill="none" stroke="#081218" stroke-width="0.6" stroke-linejoin="round" stroke-linecap="round" />
<polygon points="1279.8,641.2 1301.0,618.5 1306.5,620.0 1292.2,635.0" fill="#5f7d8e" stroke="#081218" stroke-width="0.6" stroke-linejoin="round" />
<polyline points="1268.5,592.5 1302.2,612.0" fill="none" stroke="#1a2a34" stroke-width="0.9" stroke-linejoin="round" stroke-linecap="round" stroke-dasharray=".9 6"/>
<path d="M 1152.2 530.5 Q 1143.5 532.5 1144.8 545.0 L 1153.5 555.0 L 1244.8 605.5 Q 1252.2 607.5 1253.5 595.0 Q 1252.2 585.0 1247.2 582.5 Z" fill="#7399ae" stroke="#081218" stroke-width="1" stroke-linejoin="round" stroke-linecap="round" />
<path d="M 1152.2 539.5 L 1249.8 595.0 L 1244.8 605.5 L 1153.5 555.0 Z" fill="#83a9bd" stroke="#081218" stroke-width="0.7" stroke-linejoin="round" stroke-linecap="round" />
<polyline points="1153.5,542.0 1247.2,597.5" fill="none" stroke="#081218" stroke-width="1.2" stroke-linejoin="round" stroke-linecap="round" />
<polyline points="1156.0,537.5 1251.0,591.2" fill="none" stroke="#081218" stroke-width="0.8" stroke-linejoin="round" stroke-linecap="round" />
<polygon points="1146.5,537.5 1153.5,540.0 1153.5,553.8 1145.5,544.5" fill="#a5c3d1" stroke="#081218" stroke-width="0.6" stroke-linejoin="round" />
<polyline points="1094.0,480.0 1106.0,495.0 1116.0,520.0" fill="none" stroke="#081218" stroke-width="0.6" stroke-linejoin="round" stroke-linecap="round" />
<path d="M 675.0 438.0 Q 677.5 433.8 686.2 433.8 L 695.0 435.5 L 760.0 472.0 Q 763.8 475.5 758.8 478.0 Q 751.2 479.5 745.0 477.0 L 680.0 443.0 Z" fill="#82a9bd" stroke="#081218" stroke-width="0.9" stroke-linejoin="round" stroke-linecap="round" />
<path d="M 680.0 437.5 L 692.5 437.5 L 756.2 473.0 Q 753.8 477.0 746.2 475.0 L 682.5 441.2 Z" fill="#7aa3b8" stroke="#081218" stroke-width="0.7" stroke-linejoin="round" stroke-linecap="round" />
<polyline points="682.5,439.5 750.0,475.5" fill="none" stroke="#081218" stroke-width="0.6" stroke-linejoin="round" stroke-linecap="round" />
<path d="M 795.0 393.0 Q 797.5 389.5 806.2 390.0 L 813.8 392.0 L 878.8 428.0 Q 883.0 431.2 877.5 434.0 Q 870.0 435.5 864.5 433.0 L 799.5 398.0 Z" fill="#82a9bd" stroke="#081218" stroke-width="0.9" stroke-linejoin="round" stroke-linecap="round" />
<path d="M 800.0 393.0 L 811.2 393.5 L 875.0 429.0 Q 873.0 433.0 865.5 431.0 L 802.0 396.5 Z" fill="#7aa3b8" stroke="#081218" stroke-width="0.7" stroke-linejoin="round" stroke-linecap="round" />
<polyline points="802.0,395.0 869.5,431.5" fill="none" stroke="#081218" stroke-width="0.6" stroke-linejoin="round" stroke-linecap="round" />
<path d="M 660.0 466.2 Q 661.2 460.0 672.5 458.2 L 683.8 460.0 L 755.0 498.8 Q 760.0 503.8 753.8 507.0 Q 745.0 509.0 738.8 505.5 L 667.5 470.5 Z" fill="#7aa3b8" stroke="#081218" stroke-width="0.9" stroke-linejoin="round" stroke-linecap="round" />
<polygon points="683.8,460.5 755.5,499.2 757.5,504.5 706.2,483.0 683.8,470.5" fill="#7198ad" stroke="#081218" stroke-width="0.7" stroke-linejoin="round" />
<polygon points="660.5,466.2 663.8,461.2 672.5,458.8 683.8,460.5 683.8,470.5 680.0,471.5 670.0,470.5" fill="url(#mCyl)" stroke="#081218" stroke-width="0.8" stroke-linejoin="round" />
<polygon points="669.5,470.8 681.2,469.5 706.2,483.0 700.5,486.5" fill="#fff" stroke="none" stroke-width="0" stroke-linejoin="round" />
<polyline points="706.2,483.0 751.2,507.0" fill="none" stroke="#081218" stroke-width="0.7" stroke-linejoin="round" stroke-linecap="round" />
<path d="M 851.2 395.5 Q 853.8 389.5 866.2 388.8 L 875.5 391.2 L 942.2 427.0 Q 951.0 433.0 941.0 437.5 Q 935.0 440.0 928.8 437.0 L 858.0 400.5 Z" fill="#7aa3b8" stroke="#081218" stroke-width="0.9" stroke-linejoin="round" stroke-linecap="round" />
<polygon points="875.0,392.0 942.2,427.5 946.0,433.8 873.8,400.5" fill="#7198ad" stroke="#081218" stroke-width="0.7" stroke-linejoin="round" />
<polygon points="851.8,395.5 856.2,390.5 866.2,389.2 875.0,392.0 873.8,400.5 861.2,400.5" fill="url(#mCyl)" stroke="#081218" stroke-width="0.8" stroke-linejoin="round" />
<polyline points="915.0,543.8 916.2,570.0 947.5,562.0 971.2,571.2 971.2,540.0" fill="none" stroke="#1a2a34" stroke-width="0.6" stroke-linejoin="round" stroke-linecap="round" />
<polyline points="923.8,538.8 923.8,547.5 937.5,550.0 978.8,548.0 978.8,533.8" fill="none" stroke="#1a2a34" stroke-width="0.6" stroke-linejoin="round" stroke-linecap="round" />
<polyline points="915.0,543.8 947.5,550.0 971.2,540.0" fill="none" stroke="#1a2a34" stroke-width="0.6" stroke-linejoin="round" stroke-linecap="round" />
<polyline points="916.2,570.0 916.2,557.5 947.5,550.0 947.5,562.0" fill="none" stroke="#1a2a34" stroke-width="0.6" stroke-linejoin="round" stroke-linecap="round" />
<polyline points="976.2,527.5 998.8,523.8" fill="none" stroke="#1a2a34" stroke-width="0.6" stroke-linejoin="round" stroke-linecap="round" />
<polyline points="937.5,550.0 942.5,545.0 978.8,540.0" fill="none" stroke="#1a2a34" stroke-width="0.6" stroke-linejoin="round" stroke-linecap="round" />
<polyline points="920.0,487.5 973.8,477.5 976.2,505.5" fill="none" stroke="#8ea6b3" stroke-width="0.5" stroke-linejoin="round" stroke-linecap="round" />
<polyline points="913.8,500.5 966.2,501.5 967.5,515.0" fill="none" stroke="#8ea6b3" stroke-width="0.5" stroke-linejoin="round" stroke-linecap="round" />
<polyline points="920.0,487.5 913.8,500.5" fill="none" stroke="#8ea6b3" stroke-width="0.5" stroke-linejoin="round" stroke-linecap="round" />
<polyline points="973.8,477.5 966.2,501.5" fill="none" stroke="#8ea6b3" stroke-width="0.5" stroke-linejoin="round" stroke-linecap="round" />
<polyline points="935.0,505.5 976.2,505.5" fill="none" stroke="#8ea6b3" stroke-width="0.5" stroke-linejoin="round" stroke-linecap="round" />
<path d="M 909.9 504.9 L 926.1 507.4 L 944.8 522.4 L 939.8 524.9 L 919.9 512.4 Z" fill="#7a86d8" stroke="none" stroke-width="0" stroke-linejoin="round" stroke-linecap="round" fill-opacity=".75"/>
<path d="M 947.3 521.1 L 967.3 512.4 L 971.0 507.4 L 983.5 509.9 L 962.3 522.4 Z" fill="#c8909a" stroke="none" stroke-width="0" stroke-linejoin="round" stroke-linecap="round" fill-opacity=".8"/>
<polyline points="989.8,502.4 992.9,507.4" fill="none" stroke="#d88a94" stroke-width="0.8" stroke-linejoin="round" stroke-linecap="round" />
<path d="M 945.0 533.0 L 951.0 533.0 L 951.0 553.8 L 954.0 553.8 L 948.0 566.2 L 941.5 553.8 L 944.5 553.8 Z" fill="#1fd01f" stroke="#18a818" stroke-width="0.5" stroke-linejoin="round" stroke-linecap="round" />
<path d="M 948.0 566.2 Q 951.2 570.0 949.5 576.2 L 948.5 581.2" fill="none" stroke="#22cc22" stroke-width="1" stroke-linejoin="round" stroke-linecap="round" />
<path d="M 369.8 951.0 L 352.5 942.4 L 347.0 945.1 L 340.6 935.5 L 354.3 935.5 L 355.2 938.9 L 371.7 948.3 Z" fill="#1414e0" stroke="#0a0aa0" stroke-width="0.4" stroke-linejoin="round" stroke-linecap="round" />
<path d="M 369.8 951.0 L 368.9 948.3 L 393.6 938.9 L 392.7 936.7 L 408.4 936.9 L 398.1 946.5 L 396.8 944.0 L 372.6 952.4 Z" fill="#e81414" stroke="#a00a0a" stroke-width="0.4" stroke-linejoin="round" stroke-linecap="round" />
<path d="M 367.1 951.5 L 373.0 951.5 L 373.7 980.2 L 377.6 980.0 L 372.1 993.7 L 366.0 980.7 L 368.5 980.2 Z" fill="#1ee01e" stroke="#14a014" stroke-width="0.4" stroke-linejoin="round" stroke-linecap="round" />
<polyline points="370.6,997.6 372.6,1007.2" fill="none" stroke="#3fd03f" stroke-width="1" stroke-linejoin="round" stroke-linecap="round" />
<text x="333.3" y="936.9" font-family="Liberation Serif,serif" font-size="13" fill="#3a3ab0">Z</text>
<text x="413.5" y="938.7" font-family="Liberation Serif,serif" font-size="13" fill="#e05a5a">X</text>
<text x="319" y="1002.500" font-family="Liberation Serif,serif" font-size="12.500" fill="#222" textLength="46" lengthAdjust="spacingAndGlyphs">13. 8201</text>
<text x="374" y="1002.500" font-family="Liberation Serif,serif" font-size="12.500" fill="#222" textLength="14" lengthAdjust="spacingAndGlyphs">mm</text>
</svg>
<div class="abs" id="status"></div><div class="abs" id="sright"></div><div class="abs" id="sinput"></div>
<svg class="abs" style="left:0;top:0" width="1684" height="56" viewBox="0 0 1684 56">
<!-- app logo -->
<path d="M6 8.500 C9.500 10,11.500 8.500,13 6 C14.500 8.500,17 10,21 8.500 C18.500 12,16.500 17,13.500 22 C11.500 17,8.500 12,6 8.500 Z" fill="#2a8ad4"/>
<path d="M13 6 C14.500 8.500,17 10,21 8.500 C18.500 12,16.500 17,13.500 22 Z" fill="#1a6ab8"/>
<path d="M10 11 L15 8.500 L12 15.500 L17.500 13.500" fill="none" stroke="#fff" stroke-width="1.700" stroke-linejoin="round" stroke-linecap="round"/>
<circle cx="9.800" cy="14" r="1.300" fill="#fff"/>
<!-- new -->
<path d="M42 11 L48.500 11 L52 14.500 L52 23 L42 23 Z" fill="#fff"/><path d="M48.500 11 L48.500 14.500 L52 14.500 Z" fill="#cfd6dc"/>
<!-- open -->
<path d="M65 15.500 L70 15.500 L71.500 17 L77 17 L77 24 L65 24 Z" fill="#f8c830"/><path d="M63.500 18.500 L75 18.500 L77 24 L65.500 24 Z" fill="#fbdc5a"/>
<path d="M72 9.500 C68 9.500,66 11.500,65.500 14 L63.500 13.500 L65 18 L69.500 15.500 L67.500 14.800 C68 12.800,69.500 11.500,72.500 11.800 Z" fill="#e02828"/>
<!-- save -->
<path d="M86 10 L100.500 10 L100.500 24 L87.500 24 L86 22.500 Z" fill="#1a5fa0"/><rect x="88" y="10" width="10.500" height="6" fill="#bfe4f6"/><path d="M88 12 L98.500 12 M88 14 L98.500 14" stroke="#8ac4e0" stroke-width=".6"/><rect x="89" y="18.500" width="8.500" height="5.500" fill="#e8e8e8"/><rect x="94.500" y="19.500" width="2" height="3.500" fill="#1a3a6a"/>
<!-- print -->
<path d="M113 11.500 L122 11.500 L123 16 L111.500 16 Z" fill="#f4f4f4"/><path d="M109.500 16 L124 16 L124 22 L109.500 22 Z" fill="#b8bcc0"/><path d="M109.500 19.500 L124 19.500 L124 22.500 L109.500 22.500 Z" fill="#8a8e92"/><rect x="119.500" y="17.500" width="3" height="1.500" fill="#c8d82a"/>
<!-- undo redo -->
<path d="M136 17 C138 13.500,142.500 13.500,144 19" fill="none" stroke="#3ab0e0" stroke-width="1.600"/><path d="M133 14.500 L138.500 14 L137.500 19 Z" fill="#3ab0e0"/>
<path d="M158 19 C159.500 13.500,164 13.500,166 17" fill="none" stroke="#3ab0e0" stroke-width="1.600"/><path d="M169 14.500 L163.500 14 L164.500 19 Z" fill="#3ab0e0"/>
<circle cx="184.700" cy="16.700" r="6.800" fill="none" stroke="#3a9fc8" stroke-width="1.500" stroke-dasharray="8.600 2.100" stroke-dashoffset="4.300"/>
<path d="M199 15.800 L204.500 15.800 L201.700 19 Z" fill="#d8d8d8"/>
<path d="M213 15.600 L218.500 15.600" stroke="#d8d8d8" stroke-width="1.300"/><path d="M213 18.500 L218.500 18.500 L215.700 22 Z" fill="none" stroke="#d8d8d8" stroke-width="1"/>
<path d="M234 11.500 L234 22 L228.500 16.700 Z" fill="#3aa8f0"/>
<!-- window ctrl -->
<rect x="1609" y="19" width="7" height="2" fill="#c8c8c8"/>
<rect x="1634.500" y="14.500" width="8" height="6" fill="none" stroke="#c8c8c8" stroke-width="1.200"/><rect x="1634" y="14" width="9" height="2.600" fill="#c8c8c8"/>
<path d="M1660.500 13.500 L1668.500 21 M1668.500 13.500 L1660.500 21" stroke="#c8c8c8" stroke-width="2.200"/>
<path d="M1583.500 44.500 L1586.700 41 L1590 44.500" fill="none" stroke="#e0e0e0" stroke-width="1.800"/>
<!-- gear -->
<circle cx="1621.500" cy="41" r="4.600" fill="none" stroke="#e4e6e8" stroke-width="3"/><circle cx="1621.500" cy="41" r="6.300" fill="none" stroke="#e4e6e8" stroke-width="1.800" stroke-dasharray="2.200 1.760"/>
<circle cx="1628" cy="47" r="2" fill="none" stroke="#e4e6e8" stroke-width="1.600"/><circle cx="1628" cy="47" r="3" fill="none" stroke="#e4e6e8" stroke-width="1" stroke-dasharray="1.200 1.150"/>
<!-- help -->
<circle cx="1654" cy="43" r="6.700" fill="#2050b8" stroke="#e8ecf4" stroke-width="1.200"/>
<text x="1654" y="47.500" text-anchor="middle" font-family="Liberation Sans,sans-serif" font-weight="bold" font-size="12" fill="#fff">?</text>
<path d="M1670 44.500 L1672.500 47 L1675 44.500" fill="none" stroke="#e0e0e0" stroke-width="1.200"/>
</svg>
<!-- panel header icons, left tabs, doc tab icons -->
<svg class="abs" style="left:0;top:160px" width="1684" height="92" viewBox="0 160 1684 92">
<defs>
<radialGradient id="mBall" cx=".35" cy=".3" r=".7"><stop offset="0" stop-color="#9fe0f6"/><stop offset=".5" stop-color="#1f9fd0"/><stop offset="1" stop-color="#0b5f8a"/></radialGradient>
<radialGradient id="mClk" cx=".4" cy=".4" r=".7"><stop offset="0" stop-color="#fff4b0"/><stop offset=".7" stop-color="#f6c83a"/><stop offset="1" stop-color="#e08a1a"/></radialGradient>
<linearGradient id="mTri" x1="0" y1="0" x2="1" y2="0"><stop offset="0" stop-color="#5fd8f8"/><stop offset="1" stop-color="#1a9fd8"/></linearGradient>
</defs>
<rect x="281" y="167" width="7.500" height="7.500" fill="none" stroke="#000" stroke-width="1"/><rect x="280.500" y="166.500" width="8.500" height="2" fill="#000"/>
<path d="M300.500 167 L307.500 174.500 M307.500 167 L300.500 174.500" stroke="#000" stroke-width="1.400"/>
<!-- clock -->
<ellipse cx="30.500" cy="203" rx="13" ry="11" fill="#e07a1a" transform="rotate(-12 30.500 203)"/>
<ellipse cx="30" cy="201" rx="12.500" ry="10.500" fill="url(#mClk)" stroke="#c8401a" stroke-width="1" transform="rotate(-12 30 201)"/>
<path d="M30 201 L40.500 188 L43 196 Z" fill="#f0a020" stroke="#a8501a" stroke-width=".7"/>
<path d="M21 196 L23 197 M19.500 203 L22 203 M23 209.500 L25 208 M31 211.500 L31 209 M38 207.500 L36.500 206 M41 200 L38.500 200.500 M27 191.500 L28 193.500" stroke="#b8281a" stroke-width="1.500"/>
<!-- joystick -->
<path d="M76 203.500 L92 197 L105.500 202 L105.500 207 L89 216 L76 209 Z" fill="#1a7fb0"/>
<path d="M76 203.500 L92 197 L105.500 202 L89 210.500 Z" fill="#4ac0e8"/>
<path d="M89 192 L89 204 L92 204 L92 192 Z" fill="#d8383a"/>
<ellipse cx="90.500" cy="204" rx="3.500" ry="1.800" fill="#b8282a"/>
<path d="M84.500 188 C84.500 185.500,96.500 185.500,96.500 188 L94 194 L87 194 Z" fill="#f0a82a" stroke="#c87a1a" stroke-width=".6"/>
<ellipse cx="90.500" cy="188" rx="6" ry="1.800" fill="#fbd86a"/>
<!-- glasses -->
<path d="M137.500 199 C137 195,140 192.500,143.500 193.500 M164 199 C164.500 195,161.500 192.500,158 193.500" fill="none" stroke="#1a4a6a" stroke-width="1.800"/>
<path d="M136 200 C140 198,147 199,150 201.500 C149 207,145 210,141 209.500 C137 209,135.500 204,136 200 Z" fill="#7ab0c8" stroke="#143a58" stroke-width="1.500"/>
<path d="M152 202 C155 199,162 198.500,166 200.500 C166.500 205,164 210,160 211 C156 211.500,152.500 208,152 202 Z" fill="#7ab0c8" stroke="#143a58" stroke-width="1.500"/>
<path d="M150 201.500 L152 202" stroke="#143a58" stroke-width="1.500"/>
<!-- ball on board -->
<path d="M196 203 L227 203 L227 217 L196 217 Z" fill="#d87a2a"/>
<path d="M196 206 L227 206 M196 209.500 L227 209.500" stroke="#8a4a1a" stroke-width="1.200"/>
<path d="M196 212.500 L202 212.500 L202 217 L196 217 Z M208 212.500 L214 212.500 L214 217 L208 217 Z M220 212.500 L227 212.500 L227 217 L220 217 Z" fill="#fbe8d0"/>
<circle cx="210.500" cy="201.500" r="10.500" fill="url(#mBall)"/>
<!-- combo arrow / filter -->
<path d="M248 233.500 L254 233.500 L251 237 Z" fill="#555"/>
<path d="M277.500 230 L292.500 230 L285 241.500 Z" fill="url(#mTri)" stroke="#1a88b8" stroke-width=".8"/>
<!-- doc tab icons -->
<path d="M329.500 174 L338.500 174 M334 169.500 L334 178.500" stroke="#7a5a1a" stroke-width="1.600"/>
<path d="M496.500 170 L505.500 178.500 M505.500 170 L496.500 178.500" stroke="#9a7a3a" stroke-width="1.400"/>
<path d="M531 168.500 L534.500 168.500 L534.500 172 L538 172 L538 175.500 L534.500 175.500 L534.500 179 L531 179 L531 175.500 L527.500 175.500 L527.500 172 L531 172 Z" fill="none" stroke="#c8a040" stroke-width="1.200"/>
<path d="M1664 167.500 L1672 167.500 M1664.500 170 L1668 173 L1671.500 170 M1664.500 173.500 L1668 176.500 L1671.500 173.500" fill="none" stroke="#b8864a" stroke-width="1"/>
</svg>
<!-- status icons -->
<svg class="abs" style="left:1240px;top:1008px" width="444" height="33" viewBox="1240 1008 444 33">
<defs><linearGradient id="sO" x1="0" y1="0" x2="0" y2="1"><stop offset="0" stop-color="#fde6b0"/><stop offset=".5" stop-color="#f9c868"/><stop offset="1" stop-color="#fbd98a"/></linearGradient></defs>
<rect x="1252.500" y="1012.500" width="21" height="21" rx="2" fill="url(#sO)" stroke="#c8902a" stroke-width="1"/>
<rect x="1256" y="1016" width="14" height="12.500" fill="#e8eef6" stroke="#6a8ab8" stroke-width=".8"/><rect x="1256" y="1016" width="14" height="2.500" fill="#6a8ac8"/>
<path d="M1258 1020 L1258 1027" stroke="#333" stroke-width="1" stroke-dasharray="1 1"/><path d="M1261.500 1020.500 L1267.500 1020.500 M1264.500 1020.500 L1264.500 1027.500" stroke="#c8181c" stroke-width="2"/>
<rect x="1285" y="1016" width="14" height="13" fill="#eef2f8" stroke="#6a8ab8" stroke-width=".8"/><rect x="1285" y="1016" width="14" height="2.500" fill="#6a8ac8"/>
<path d="M1287.500 1021 L1296.500 1021 M1287.500 1023.500 L1296.500 1023.500 M1287.500 1026 L1296.500 1026" stroke="#445" stroke-width=".9"/>
<path d="M1677 1021 L1679 1021 M1673.500 1024.500 L1675.500 1024.500 M1677 1024.500 L1679 1024.500 M1670 1028 L1672 1028 M1673.500 1028 L1675.500 1028 M1677 1028 L1679 1028" stroke="#e8e8e8" stroke-width="2"/>
</svg>

<div class="abs" id="lborder"></div><div class="abs" id="rborder"></div>
</body></html>
